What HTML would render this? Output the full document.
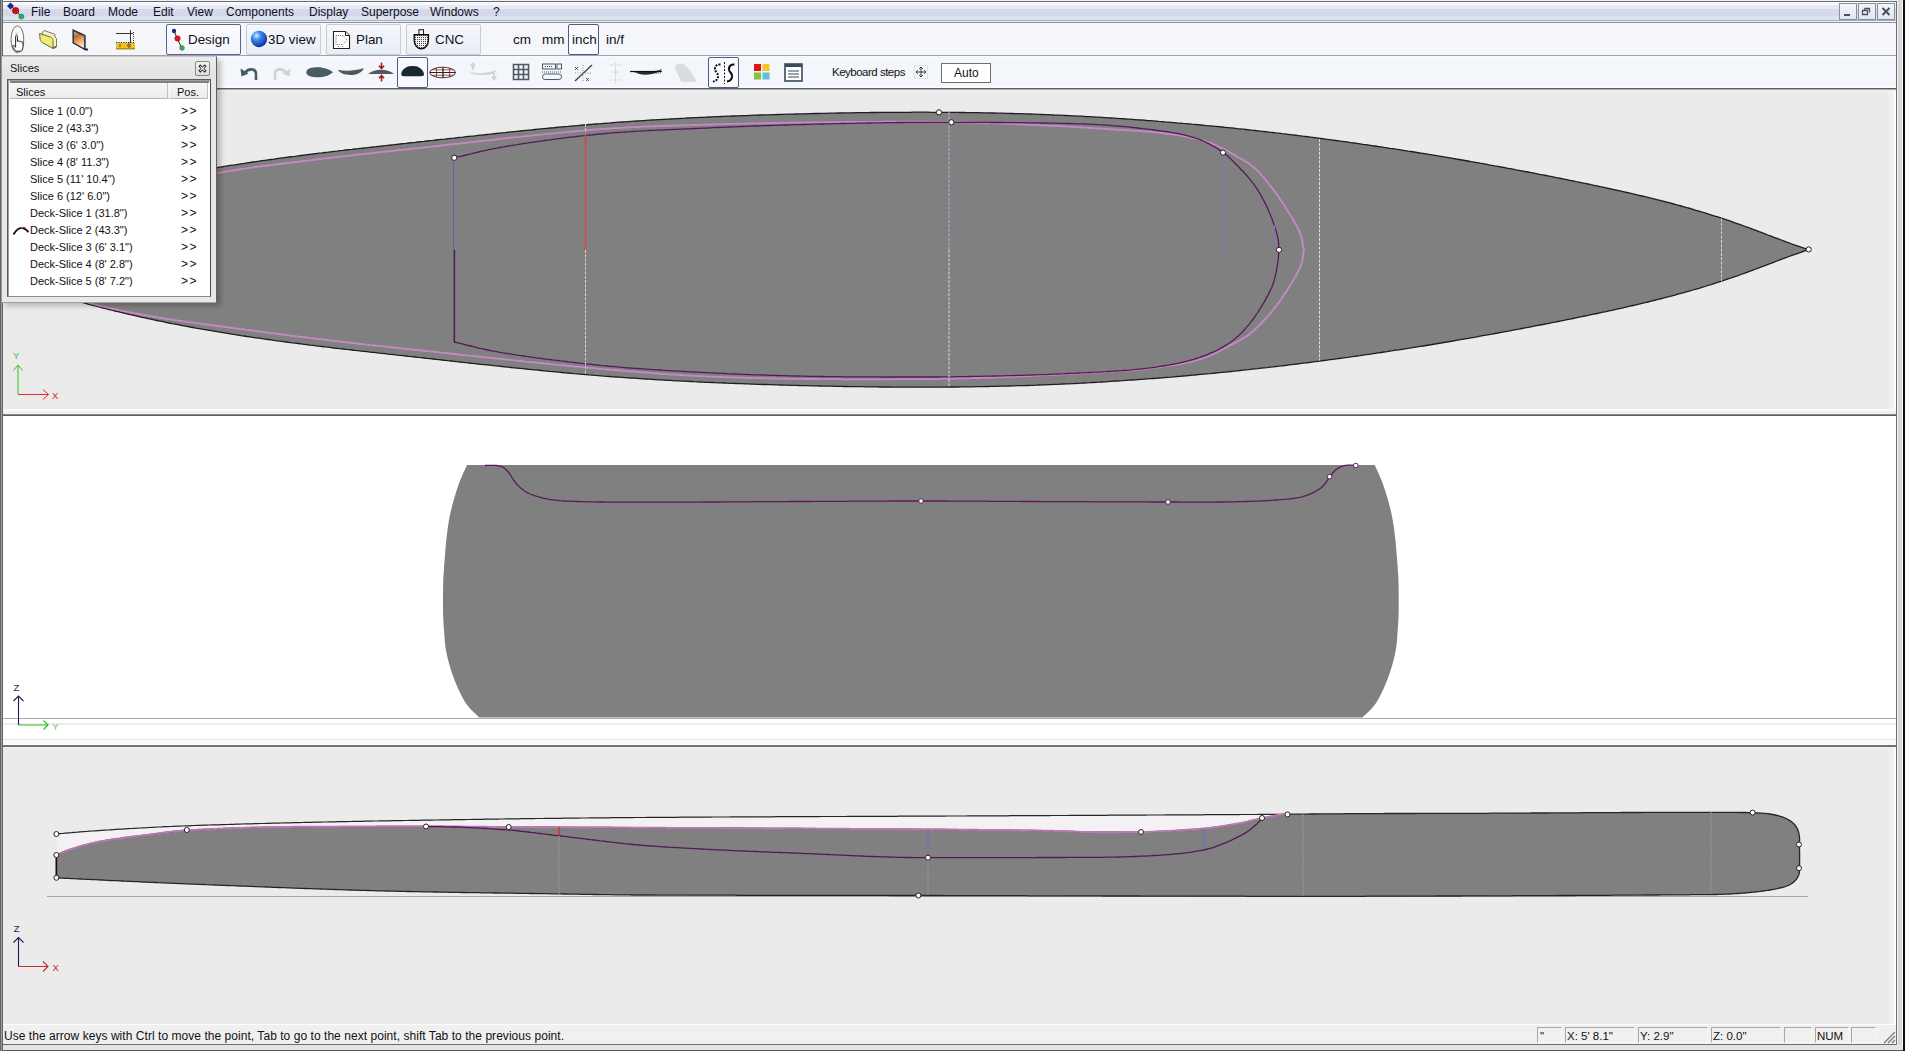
<!DOCTYPE html>
<html><head><meta charset="utf-8">
<style>
*{margin:0;padding:0;box-sizing:border-box}
html,body{width:1905px;height:1051px;overflow:hidden;background:#ebebeb;font-family:"Liberation Sans",sans-serif;color:#000}
.a{position:absolute}
.t{position:absolute;white-space:nowrap;line-height:1}
#menubar{left:2px;top:2px;width:1894px;height:18px;background:linear-gradient(#fdfdff 0px,#fdfdff 1px,#f6f7fd 1px,#f6f7fd 3px,#e9eaf8 3px,#e6e8f6 7px,#d5d9ec 7px,#d3d8eb 14px,#d9e3ef 14px,#dce5f0 18px)}
.mi{position:absolute;top:5px;font-size:12px;color:#101018}
#tb1{left:2px;top:23px;width:1894px;height:32px;background:#f4f6fa}
#tb2{left:2px;top:57px;width:1894px;height:30px;background:#f3f6fa}
.btn{position:absolute;top:24px;width:75px;height:31px;border:1px solid #c6ccd8;border-radius:2px;background:linear-gradient(#f4f7fc,#e9eef6)}
.btn.sel{border-color:#5a6290;background:linear-gradient(#fbfcff,#f2f5fb)}
.bt{position:absolute;top:8px;font-size:13.4px;color:#101020}
.unit{position:absolute;top:31.5px;font-size:13.5px;color:#101018}
.row{position:absolute;left:30px;font-size:11px;color:#101010}
.gg{position:absolute;left:181px;font-size:12px;letter-spacing:1.5px;color:#101010;margin-top:-1px}
.sb{position:absolute;top:1027px;height:16px;border:1px solid #a8a8a8;border-right-color:#f8f8f8;border-bottom-color:#f8f8f8}
.st{position:absolute;top:1030px;font-size:11.5px;color:#101010}
</style></head><body>
<!-- outer frame -->
<div class="a" style="left:0;top:0;width:1905px;height:1051px;background:#ebebeb"></div>
<div class="a" style="left:0;top:0;width:1903px;height:1px;background:#f2f2f2"></div>
<div class="a" style="left:0;top:1px;width:1897px;height:1px;background:#686e6e"></div>
<div class="a" style="left:1896px;top:1px;width:1px;height:1044px;background:#6e6e6e"></div>
<div class="a" style="left:1897px;top:0;width:6px;height:1051px;background:linear-gradient(90deg,#f0f0f0 0,#f0f0f0 1px,#d8d8d8 1px,#d8d8d8 5px,#fafafa 5px)"></div>
<div class="a" style="left:1903px;top:0;width:2px;height:1051px;background:#101012"></div>

<!-- menu bar -->
<div id="menubar" class="a"></div>
<div class="a" style="left:2px;top:20px;width:1894px;height:1px;background:#a9b0b8"></div>
<div class="a" style="left:2px;top:21px;width:1894px;height:1px;background:#eef0f5"></div>
<div class="a" style="left:2px;top:22px;width:1894px;height:1px;background:#8c9299"></div>
<svg class="a" style="left:6px;top:2px" width="22" height="20" viewBox="0 0 22 20">
 <line x1="4.5" y1="3.5" x2="15.5" y2="14.5" stroke="#333" stroke-width="1"/>
 <rect x="2" y="1.5" width="5" height="5" fill="#1c2c80" transform="rotate(45 4.5 4)"/>
 <circle cx="9.6" cy="8.6" r="3.2" fill="#d01010" stroke="#700" stroke-width="0.6"/>
 <circle cx="15.4" cy="14.6" r="2.5" fill="#30b040" stroke="#175" stroke-width="0.6"/>
</svg>
<span class="mi" style="left:31px">File</span>
<span class="mi" style="left:63px">Board</span>
<span class="mi" style="left:108px">Mode</span>
<span class="mi" style="left:153px">Edit</span>
<span class="mi" style="left:187px">View</span>
<span class="mi" style="left:226px">Components</span>
<span class="mi" style="left:309px">Display</span>
<span class="mi" style="left:361px">Superpose</span>
<span class="mi" style="left:430px">Windows</span>
<span class="mi" style="left:493px">?</span>
<!-- mdi buttons -->
<div class="a" style="left:1839px;top:3px;width:18px;height:17px;border:1px solid #8a8e98;background:linear-gradient(#f2f6fc,#dde6f2)"></div>
<div class="a" style="left:1858px;top:3px;width:18px;height:17px;border:1px solid #8a8e98;background:linear-gradient(#f2f6fc,#dde6f2)"></div>
<div class="a" style="left:1877px;top:3px;width:18px;height:17px;border:1px solid #8a8e98;background:linear-gradient(#f2f6fc,#dde6f2)"></div>
<div class="a" style="left:1844px;top:14px;width:6px;height:2px;background:#4a5058"></div>
<svg class="a" style="left:1858px;top:3px" width="18" height="17"><path d="M6.5 5.5h5v4M4.5 7.5h5v4h-5z M6.5 5.5v2" fill="none" stroke="#4a5058" stroke-width="1.3"/></svg>
<svg class="a" style="left:1877px;top:3px" width="18" height="17"><path d="M5.5 5l7 7M12.5 5l-7 7" stroke="#4a5058" stroke-width="2"/></svg>

<!-- toolbar 1 -->
<div id="tb1" class="a"></div>
<div class="a" style="left:2px;top:55px;width:1894px;height:1px;background:#a0a2a8"></div>
<div class="a" style="left:2px;top:56px;width:1894px;height:1px;background:#fafbfd"></div>
<!-- hand board icon -->
<svg class="a" style="left:10px;top:25px" width="16" height="29" viewBox="0 0 16 29">
 <path d="M7.4 1C11 1 13.7 7 13.7 14.5C13.7 22 11 27.6 7.4 27.6C3.8 27.6 1.1 22 1.1 14.5C1.1 7 3.8 1 7.4 1z" fill="#fcfcfc" stroke="#606060" stroke-width="0.9"/>
 <path d="M5.5 7.5l2.6 2.6M8.1 7.5l-2.6 2.6" stroke="#eaa0b8" stroke-width="0.9"/>
 <path d="M5.6 11.2c0-0.9 1.8-0.9 1.8 0v5.2c0.5-0.8 1.9-0.6 2 0.3c0.5-0.7 1.8-0.5 1.9 0.4c0.6-0.5 1.7-0.2 1.7 0.7v3.6c0 2-0.7 3.6-1.6 4.8h-5.6c-0.8-1-2.4-3-3.1-4.6c-0.4-0.9 0.6-1.7 1.3-1l1.6 1.6z" fill="#fff" stroke="#111" stroke-width="0.9"/>
</svg>
<!-- folder -->
<svg class="a" style="left:38px;top:29px" width="21" height="21" viewBox="0 0 21 21">
 <path d="M4 4l2-2.5l3 1l8 3v2.5l1.5 1.5v8l-2 2-11-6z" fill="#f8f4c8" stroke="#6a6a48" stroke-width="0.9"/>
 <path d="M1.5 4.5l11 3.5c1.5 0.5 2.5 2 2.5 3.5v8l-10-5.5c-1.5-0.8-2.5-2-2.8-3.5z" fill="#f0ec70" stroke="#6a6a48" stroke-width="1"/>
 <path d="M14.5 19l4-1.5" stroke="#6a6a50" stroke-width="1.4"/>
</svg>
<!-- save icon -->
<svg class="a" style="left:72px;top:29px" width="17" height="22" viewBox="0 0 17 22">
 <defs><linearGradient id="sg" x1="0" y1="0" x2="0.3" y2="1"><stop offset="0" stop-color="#b8d8f0"/><stop offset="0.35" stop-color="#c06828"/><stop offset="0.7" stop-color="#f0b070"/><stop offset="1" stop-color="#f8f0d0"/></linearGradient></defs>
 <path d="M1.2 1.2l11.5 5.3v13.8l-11.5-6.5z" fill="url(#sg)" stroke="#28323c" stroke-width="1.5"/>
 <path d="M12.7 6.5l1 0.4v13l-1-0.4z" fill="#506070"/>
 <path d="M12 20l4 0.8" stroke="#28323c" stroke-width="2"/>
</svg>
<!-- ruler -->
<svg class="a" style="left:114px;top:29px" width="22" height="22" viewBox="0 0 22 22">
 <path d="M2 4.5h17M16.5 1v13" stroke="#333" stroke-width="1"/>
 <path d="M19.5 3v10" stroke="#333" stroke-width="1" stroke-dasharray="1 1"/>
 <path d="M2 13.5h18" stroke="#222" stroke-width="1.2" stroke-dasharray="1.2 1.2"/>
 <rect x="2" y="14" width="19" height="6" fill="#f0c020"/>
 <rect x="2" y="19" width="19" height="1.5" fill="#b09020"/>
 <path d="M6 15v3M14 15h2v3h-2z" stroke="#333" stroke-width="0.8" fill="none"/>
</svg>
<!-- mode buttons -->
<div class="btn sel" style="left:166px"></div>
<div class="btn" style="left:246px"></div>
<div class="btn" style="left:326px"></div>
<div class="btn" style="left:406px"></div>
<svg class="a" style="left:171px;top:28px" width="16" height="24" viewBox="0 0 16 24">
 <line x1="3" y1="3" x2="11" y2="21" stroke="#222" stroke-width="1"/>
 <circle cx="3" cy="3" r="2.2" fill="#1c2c80"/>
 <circle cx="6.5" cy="10.5" r="3" fill="#d01818"/>
 <circle cx="11" cy="20" r="2.4" fill="#40b040" stroke="#175" stroke-width="0.5"/>
</svg>
<span class="bt" style="left:188px;top:32px">Design</span>
<svg class="a" style="left:250px;top:30px" width="18" height="18"><defs><radialGradient id="gb" cx="0.35" cy="0.3" r="0.75"><stop offset="0" stop-color="#d8ecff"/><stop offset="0.35" stop-color="#3a8af0"/><stop offset="1" stop-color="#0a2a9a"/></radialGradient></defs><circle cx="9" cy="9" r="8.2" fill="url(#gb)"/></svg>
<span class="bt" style="left:268px;top:32px">3D view</span>
<svg class="a" style="left:332px;top:30px" width="19" height="20" viewBox="0 0 19 20">
 <path d="M1.5 1.5h12l4 4v13h-16z" fill="#fff" stroke="#222" stroke-width="1.1"/>
 <path d="M13.5 1.5v4h4" fill="#e8e8e8" stroke="#222" stroke-width="1"/>
 <path d="M4 5.5h7l4 4.5l-4 4.5h-7M4 5.5v9" fill="none" stroke="#666" stroke-width="0.9" stroke-dasharray="1 1"/>
 <path d="M6 16.5h2M10 16.5h2" stroke="#555" stroke-width="0.9" stroke-dasharray="1 1"/>
</svg>
<span class="bt" style="left:356px;top:32px">Plan</span>
<svg class="a" style="left:413px;top:29px" width="17" height="21" viewBox="0 0 17 21">
 <defs><pattern id="dots" width="2" height="2" patternUnits="userSpaceOnUse"><rect width="2" height="2" fill="#f4f4f4"/><rect width="1" height="1" fill="#444"/></pattern></defs>
 <rect x="6" y="0.7" width="4.5" height="5" fill="#fff" stroke="#222" stroke-width="1.1"/>
 <path d="M1.2 5.7h14.2v5.5c0 4.6-3.1 8.6-7.1 8.6s-7.1-4-7.1-8.6z" fill="url(#dots)" stroke="#111" stroke-width="1.4"/>
</svg>
<span class="bt" style="left:435px;top:32px">CNC</span>
<!-- units -->
<span class="unit" style="left:513px">cm</span>
<span class="unit" style="left:542px">mm</span>
<div class="a" style="left:568px;top:24px;width:31px;height:31px;border:1px solid #525a8c;border-radius:2px;background:#f8fafe"></div>
<span class="unit" style="left:572px">inch</span>
<span class="unit" style="left:606px">in/f</span>

<!-- toolbar 2 -->
<div id="tb2" class="a"></div>
<div class="a" style="left:2px;top:87px;width:1894px;height:1px;background:#fafcfd"></div>
<div class="a" style="left:2px;top:88px;width:1894px;height:1px;background:#5c5e62"></div>
<div class="a" style="left:2px;top:89px;width:1894px;height:1px;background:#a8a8aa"></div>
<div class="a" style="left:2px;top:90px;width:1894px;height:1px;background:#f2f2f2"></div>
<!-- undo/redo -->
<svg class="a" style="left:239px;top:64px" width="22" height="18" viewBox="0 0 22 18">
 <path d="M6 9c3-5 11-5 11 1v6" fill="none" stroke="#4a5a62" stroke-width="2.6"/>
 <path d="M1.5 4.5l1 8l7-3z" fill="#4a5a62"/>
</svg>
<svg class="a" style="left:270px;top:64px" width="22" height="18" viewBox="0 0 22 18">
 <path d="M16 9c-3-5-11-5-11 1v6" fill="none" stroke="#d0d2d4" stroke-width="2.6"/>
 <path d="M20.5 4.5l-1 8l-7-3z" fill="#d0d2d4"/>
</svg>
<svg class="a" style="left:305px;top:66px" width="30" height="13"><path d="M1.3 6.3C1.3 2.3 7 1.2 12.5 1.2C19.5 1.2 24.5 3.5 28 6.3C24.5 9.3 19.5 11.3 12.5 11.3C7 11.3 1.3 10.3 1.3 6.3z" fill="#4a5c60"/></svg>
<svg class="a" style="left:337px;top:66px" width="28" height="10"><path d="M0.8 3.8C8 5.2 18 5 26.8 2.2C25.5 6 20.5 9 13.5 9C7 9 3 7 0.8 3.8z" fill="#4a5c60"/></svg>
<svg class="a" style="left:367px;top:60px" width="28" height="24" viewBox="0 0 28 24">
 <path d="M1 14C5 10.8 9 9.8 14 9.8C19 9.8 23 10.8 27 14z" fill="#4a5c60"/>
 <path d="M14.5 2.5v5.5M12 5.8l2.5 2.8l2.5-2.8M14.5 21.5v-5.5M12 18.2l2.5-2.8l2.5 2.8" stroke="#a81c24" stroke-width="1.6" fill="none"/>
</svg>
<div class="a" style="left:397px;top:57px;width:31px;height:31px;border:1px solid #525a8c;border-radius:2px;background:#f8fafe"></div>
<svg class="a" style="left:400px;top:65px" width="26" height="12"><path d="M1.2 9.2C1.2 6 5 2.5 8 1.5C10 0.8 15 0.8 17 1.5C20 2.5 24 6 24 9.2C24 10.5 23 11.2 21 11.2H4C2.2 11.2 1.2 10.5 1.2 9.2z" fill="#1a2a30"/></svg>
<svg class="a" style="left:429px;top:66px" width="28" height="13" viewBox="0 0 28 13">
 <defs><clipPath id="gc"><ellipse cx="13.6" cy="6.5" rx="12.8" ry="5.3"/></clipPath></defs>
 <ellipse cx="13.6" cy="6.5" rx="12.8" ry="5.3" fill="#fff"/>
 <g clip-path="url(#gc)"><path d="M0 3.8h28M0 6.5h28M0 9.2h28M7.5 0v13M14 0v13M20.5 0v13" stroke="#7a2a2a" stroke-width="0.8"/>
 <path d="M0 6.5h28M14 0v13" stroke="#2a1a1a" stroke-width="0.9"/></g>
 <ellipse cx="13.6" cy="6.5" rx="12.8" ry="5.3" fill="none" stroke="#3a2424" stroke-width="0.9"/>
</svg>
<svg class="a" style="left:467px;top:61px" width="32" height="20" viewBox="0 0 32 20">
 <path d="M2 10c5 3 18 3 27 -1c0 3-5 5-13 5s-11-1-14-4z" fill="#d0d2d4"/>
 <path d="M6 3v6M3.8 5.5l2.2-3l2.2 3M27 12v6M24.8 15.5l2.2 3l2.2-3" stroke="#d0d2d4" stroke-width="1.8" fill="none"/>
</svg>
<!-- grid -->
<svg class="a" style="left:512px;top:63px" width="18" height="18"><path d="M1.5 1.5h15v15h-15z M6.5 1.5v15M11.5 1.5v15M1.5 6.5h15M1.5 11.5h15" fill="none" stroke="#4a5a60" stroke-width="1.6"/></svg>
<svg class="a" style="left:541px;top:63px" width="22" height="19" viewBox="0 0 22 19">
 <rect x="1.5" y="1" width="13" height="5" fill="none" stroke="#4a5a60" stroke-width="1"/>
 <rect x="16" y="1" width="4.5" height="5" fill="none" stroke="#4a5a60" stroke-width="1"/>
 <path d="M4 3.5h8" stroke="#4a5a60" stroke-dasharray="1 1"/>
 <path d="M1 9h20" stroke="#4a5a60" stroke-dasharray="1 1"/>
 <rect x="1.5" y="11" width="19" height="5.5" rx="2.7" fill="none" stroke="#4a5a60" stroke-width="1"/>
</svg>
<svg class="a" style="left:573px;top:63px" width="21" height="20" viewBox="0 0 21 20">
 <path d="M2 18l17-16" stroke="#3a4a50" stroke-width="1.4"/>
 <path d="M10 2v16M2 10h17" stroke="#777" stroke-width="0.8" stroke-dasharray="1 1.5"/>
 <path d="M2 4l3 3M5 4l-3 3M13 15l3 3M16 15l-3 3" stroke="#333" stroke-width="0.8"/>
</svg>
<svg class="a" style="left:606px;top:61px" width="19" height="24"><path d="M9.5 1v22M3 4h13M3 19h13M6 11h7" stroke="#dcdcdc" stroke-width="1"/><circle cx="9.5" cy="11.5" r="1.5" fill="#dcdcdc"/></svg>
<svg class="a" style="left:629px;top:66px" width="34" height="11" viewBox="0 0 34 11">
 <path d="M1 5h24c3 0 5-1 8-2c-2 3-5 4-10 5c-5 1-12 1-15-1z" fill="#2a2a2a"/>
 <path d="M1 5.5h32" stroke="#111" stroke-width="1.2"/>
 <path d="M27 7h6" stroke="#555" stroke-dasharray="1 1"/>
</svg>
<svg class="a" style="left:672px;top:62px" width="26" height="22" viewBox="0 0 26 22">
 <path d="M3 5c0-3 4-4 8-3c5 2 9 10 13 16v2h-15c-1-5-6-11-6-15z" fill="#dadcdd"/>
</svg>
<div class="a" style="left:708px;top:57px;width:31px;height:31px;border:1px solid #525a8c;border-radius:2px;background:#f8fafe"></div>
<svg class="a" style="left:710px;top:61px" width="27" height="24" viewBox="0 0 27 24">
 <path d="M10.5 3.5C5 3 3.5 8 6.5 11.5C9.5 15 8 20 3 20.5" fill="none" stroke="#111" stroke-width="2" stroke-dasharray="2 1.2"/>
 <path d="M14.5 1v22" stroke="#111" stroke-width="1" stroke-dasharray="2 1.5"/>
 <path d="M24.5 3.5C19 3 17.5 8 20.5 11.5C23.5 15 22 20 17 20.5" fill="none" stroke="#111" stroke-width="2"/>
</svg>
<svg class="a" style="left:753px;top:63px" width="18" height="18">
 <rect x="1" y="1" width="7" height="7" fill="#e01418"/><rect x="9.5" y="1" width="7" height="7" fill="#f8c428"/>
 <rect x="1" y="9.5" width="7" height="7" fill="#88c040"/><rect x="9.5" y="9.5" width="7" height="7" fill="#60c0d8"/>
</svg>
<svg class="a" style="left:784px;top:63px" width="19" height="19" viewBox="0 0 19 19">
 <rect x="1" y="1" width="17" height="17" fill="#fff" stroke="#3a4a58" stroke-width="1.6"/>
 <rect x="1" y="1" width="17" height="3" fill="#3a4a58"/>
 <path d="M4 8h11M4 11h11M4 14h11" stroke="#3a4a58" stroke-width="1.2"/>
</svg>
<span class="t" style="left:832px;top:67px;font-size:11.5px;color:#111;letter-spacing:-0.5px">Keyboard steps</span>
<svg class="a" style="left:914px;top:65px" width="14" height="14" viewBox="0 0 14 14">
 <rect x="0.5" y="0.5" width="13" height="13" fill="none" stroke="#bbb" stroke-width="0.6" stroke-dasharray="1 1"/><path d="M7 2v10M2 7h10M5.2 3.8L7 2l1.8 1.8M5.2 10.2L7 12l1.8-1.8M3.8 5.2L2 7l1.8 1.8M10.2 5.2L12 7l-1.8 1.8" fill="none" stroke="#3a3a3a" stroke-width="1"/>
</svg>
<div class="a" style="left:941px;top:63px;width:50px;height:20px;border:1px solid #6e6e6e;background:#fff"></div>
<span class="t" style="left:954px;top:67px;font-size:12px;color:#111">Auto</span>

<!-- ===== PANEL 1: top view ===== -->
<div class="a" style="left:2px;top:91px;width:1894px;height:318px;background:#ebebeb"></div>
<div class="a" style="left:2px;top:409px;width:1894px;height:5px;background:linear-gradient(#fafafa 0,#fafafa 2px,#f0f0f0 2px)"></div>
<div class="a" style="left:2px;top:414px;width:1894px;height:1px;background:#8a8a8a"></div>
<div class="a" style="left:2px;top:415px;width:1894px;height:1px;background:#5e5e5e"></div>
<svg class="a" style="left:0;top:0" width="1905" height="420">
 <polygon points="40,209.7 43,208.7 46,207.8 49,206.8 52,205.9 55,205 58,204 61,203.1 64,202.2 67,201.3 70,200.5 73,199.6 76,198.7 79,197.9 82,197.1 85,196.2 88,195.4 91,194.6 94,193.8 97,193 100,192.2 103,191.4 106,190.7 109,189.9 112,189.2 115,188.4 118,187.7 121,187 124,186.3 127,185.5 130,184.8 133,184.2 136,183.5 139,182.8 142,182.1 145,181.5 148,180.8 151,180.2 154,179.5 157,178.9 160,178.3 163,177.7 166,177 169,176.4 172,175.8 175,175.3 178,174.7 181,174.1 184,173.5 187,173 190,172.4 193,171.9 196,171.3 199,170.8 202,170.2 205,169.7 208,169.2 211,168.7 214,168.2 217,167.7 220,167.2 223,166.7 226,166.2 229,165.7 232,165.2 235,164.8 238,164.3 241,163.8 244,163.4 247,162.9 250,162.5 253,162 256,161.6 259,161.2 262,160.7 265,160.3 268,159.9 271,159.5 274,159.1 277,158.6 280,158.2 283,157.8 286,157.4 289,157 292,156.6 295,156.3 298,155.9 301,155.5 304,155.1 307,154.7 310,154.3 313,154 316,153.6 319,153.2 322,152.9 325,152.5 328,152.2 331,151.8 334,151.4 337,151.1 340,150.7 343,150.4 346,150 349,149.7 352,149.4 355,149 358,148.7 361,148.3 364,148 367,147.7 370,147.3 373,147 376,146.7 379,146.3 382,146 385,145.7 388,145.3 391,145 394,144.7 397,144.3 400,144 403,143.7 406,143.4 409,143 412,142.7 415,142.4 418,142 421,141.7 424,141.4 427,141 430,140.7 433,140.4 436,140 439,139.7 442,139.4 445,139.1 448,138.7 451,138.4 454,138.1 457,137.7 460,137.4 463,137.1 466,136.7 469,136.4 472,136.1 475,135.8 478,135.4 481,135.1 484,134.8 487,134.5 490,134.2 493,133.8 496,133.5 499,133.2 502,132.9 505,132.6 508,132.2 511,131.9 514,131.6 517,131.3 520,131 523,130.7 526,130.4 529,130.1 532,129.8 535,129.5 538,129.2 541,128.9 544,128.6 547,128.3 550,128 553,127.8 556,127.5 559,127.2 562,126.9 565,126.6 568,126.4 571,126.1 574,125.8 577,125.6 580,125.3 583,125 586,124.8 589,124.5 592,124.3 595,124 598,123.8 601,123.6 604,123.3 607,123.1 610,122.9 613,122.6 616,122.4 619,122.2 622,122 625,121.8 628,121.6 631,121.4 634,121.2 637,121 640,120.8 643,120.6 646,120.4 649,120.2 652,120 655,119.8 658,119.6 661,119.5 664,119.3 667,119.1 670,119 673,118.8 676,118.6 679,118.5 682,118.3 685,118.2 688,118 691,117.9 694,117.7 697,117.6 700,117.4 703,117.3 706,117.1 709,117 712,116.9 715,116.7 718,116.6 721,116.5 724,116.4 727,116.2 730,116.1 733,116 736,115.9 739,115.8 742,115.7 745,115.6 748,115.5 751,115.3 754,115.2 757,115.1 760,115 763,114.9 766,114.9 769,114.8 772,114.7 775,114.6 778,114.5 781,114.4 784,114.3 787,114.2 790,114.1 793,114.1 796,114 799,113.9 802,113.8 805,113.8 808,113.7 811,113.6 814,113.5 817,113.5 820,113.4 823,113.3 826,113.3 829,113.2 832,113.2 835,113.1 838,113 841,113 844,112.9 847,112.9 850,112.8 853,112.8 856,112.7 859,112.7 862,112.7 865,112.6 868,112.6 871,112.5 874,112.5 877,112.5 880,112.4 883,112.4 886,112.4 889,112.4 892,112.3 895,112.3 898,112.3 901,112.3 904,112.3 907,112.3 910,112.3 913,112.2 916,112.2 919,112.2 922,112.2 925,112.2 928,112.2 931,112.3 934,112.3 937,112.3 940,112.3 943,112.3 946,112.3 949,112.4 952,112.4 955,112.4 958,112.4 961,112.5 964,112.5 967,112.6 970,112.6 973,112.6 976,112.7 979,112.7 982,112.8 985,112.8 988,112.9 991,113 994,113 997,113.1 1000,113.2 1003,113.2 1006,113.3 1009,113.4 1012,113.5 1015,113.6 1018,113.7 1021,113.7 1024,113.8 1027,113.9 1030,114 1033,114.1 1036,114.2 1039,114.4 1042,114.5 1045,114.6 1048,114.7 1051,114.8 1054,115 1057,115.1 1060,115.2 1063,115.4 1066,115.5 1069,115.6 1072,115.8 1075,115.9 1078,116.1 1081,116.2 1084,116.4 1087,116.6 1090,116.7 1093,116.9 1096,117.1 1099,117.2 1102,117.4 1105,117.6 1108,117.8 1111,118 1114,118.2 1117,118.4 1120,118.6 1123,118.7 1126,119 1129,119.2 1132,119.4 1135,119.6 1138,119.8 1141,120 1144,120.2 1147,120.5 1150,120.7 1153,120.9 1156,121.1 1159,121.4 1162,121.6 1165,121.9 1168,122.1 1171,122.3 1174,122.6 1177,122.9 1180,123.1 1183,123.4 1186,123.6 1189,123.9 1192,124.2 1195,124.4 1198,124.7 1201,125 1204,125.3 1207,125.6 1210,125.8 1213,126.1 1216,126.4 1219,126.7 1222,127 1225,127.3 1228,127.6 1231,127.9 1234,128.2 1237,128.6 1240,128.9 1243,129.2 1246,129.5 1249,129.8 1252,130.2 1255,130.5 1258,130.8 1261,131.2 1264,131.5 1267,131.8 1270,132.2 1273,132.5 1276,132.9 1279,133.2 1282,133.6 1285,133.9 1288,134.3 1291,134.7 1294,135 1297,135.4 1300,135.8 1303,136.2 1306,136.5 1309,136.9 1312,137.3 1315,137.7 1318,138.1 1321,138.5 1324,138.9 1327,139.3 1330,139.7 1333,140.1 1336,140.5 1339,140.9 1342,141.3 1345,141.7 1348,142.1 1351,142.6 1354,143 1357,143.4 1360,143.8 1363,144.3 1366,144.7 1369,145.1 1372,145.6 1375,146 1378,146.5 1381,146.9 1384,147.4 1387,147.8 1390,148.3 1393,148.7 1396,149.2 1399,149.6 1402,150.1 1405,150.6 1408,151.1 1411,151.5 1414,152 1417,152.5 1420,153 1423,153.4 1426,153.9 1429,154.4 1432,154.9 1435,155.4 1438,155.9 1441,156.4 1444,156.9 1447,157.4 1450,157.9 1453,158.4 1456,159 1459,159.5 1462,160 1465,160.5 1468,161 1471,161.6 1474,162.1 1477,162.6 1480,163.2 1483,163.7 1486,164.2 1489,164.8 1492,165.3 1495,165.9 1498,166.4 1501,167 1504,167.5 1507,168.1 1510,168.6 1513,169.2 1516,169.8 1519,170.3 1522,170.9 1525,171.5 1528,172 1531,172.6 1534,173.2 1537,173.8 1540,174.4 1543,174.9 1546,175.5 1549,176.1 1552,176.7 1555,177.3 1558,177.9 1561,178.5 1564,179.1 1567,179.7 1570,180.3 1573,180.9 1576,181.6 1579,182.2 1582,182.8 1585,183.4 1588,184 1591,184.7 1594,185.3 1597,185.9 1600,186.6 1603,187.2 1606,187.8 1609,188.5 1612,189.1 1615,189.8 1618,190.5 1621,191.1 1624,191.8 1627,192.5 1630,193.2 1633,193.9 1636,194.6 1639,195.3 1642,196 1645,196.7 1648,197.4 1651,198.2 1654,198.9 1657,199.7 1660,200.4 1663,201.2 1666,202 1669,202.7 1672,203.5 1675,204.3 1678,205.2 1681,206 1684,206.8 1687,207.7 1690,208.5 1693,209.4 1696,210.3 1699,211.1 1702,212 1705,212.9 1708,213.9 1711,214.8 1714,215.8 1717,216.7 1720,217.7 1723,218.7 1726,219.7 1729,220.7 1732,221.7 1735,222.8 1738,223.8 1741,224.9 1744,226 1747,227.1 1750,228.2 1753,229.3 1756,230.4 1759,231.6 1762,232.7 1765,233.8 1768,235 1771,236.1 1774,237.3 1777,238.4 1780,239.5 1783,240.7 1786,241.8 1789,242.9 1792,244 1795,245.1 1798,246.1 1801,247.1 1804,248.2 1807,249.2 1808.7,249.7 1808.7,249.7 1807,250.2 1804,251.2 1801,252.3 1798,253.3 1795,254.3 1792,255.4 1789,256.5 1786,257.6 1783,258.7 1780,259.9 1777,261 1774,262.1 1771,263.3 1768,264.4 1765,265.6 1762,266.7 1759,267.8 1756,269 1753,270.1 1750,271.2 1747,272.3 1744,273.4 1741,274.5 1738,275.6 1735,276.6 1732,277.7 1729,278.7 1726,279.7 1723,280.7 1720,281.7 1717,282.7 1714,283.6 1711,284.6 1708,285.5 1705,286.5 1702,287.4 1699,288.3 1696,289.1 1693,290 1690,290.9 1687,291.7 1684,292.6 1681,293.4 1678,294.2 1675,295.1 1672,295.9 1669,296.7 1666,297.4 1663,298.2 1660,299 1657,299.7 1654,300.5 1651,301.2 1648,302 1645,302.7 1642,303.4 1639,304.1 1636,304.8 1633,305.5 1630,306.2 1627,306.9 1624,307.6 1621,308.3 1618,308.9 1615,309.6 1612,310.3 1609,310.9 1606,311.6 1603,312.2 1600,312.8 1597,313.5 1594,314.1 1591,314.7 1588,315.4 1585,316 1582,316.6 1579,317.2 1576,317.8 1573,318.5 1570,319.1 1567,319.7 1564,320.3 1561,320.9 1558,321.5 1555,322.1 1552,322.7 1549,323.3 1546,323.9 1543,324.5 1540,325 1537,325.6 1534,326.2 1531,326.8 1528,327.4 1525,327.9 1522,328.5 1519,329.1 1516,329.6 1513,330.2 1510,330.8 1507,331.3 1504,331.9 1501,332.4 1498,333 1495,333.5 1492,334.1 1489,334.6 1486,335.2 1483,335.7 1480,336.2 1477,336.8 1474,337.3 1471,337.8 1468,338.4 1465,338.9 1462,339.4 1459,339.9 1456,340.4 1453,341 1450,341.5 1447,342 1444,342.5 1441,343 1438,343.5 1435,344 1432,344.5 1429,345 1426,345.5 1423,346 1420,346.4 1417,346.9 1414,347.4 1411,347.9 1408,348.3 1405,348.8 1402,349.3 1399,349.8 1396,350.2 1393,350.7 1390,351.1 1387,351.6 1384,352 1381,352.5 1378,352.9 1375,353.4 1372,353.8 1369,354.3 1366,354.7 1363,355.1 1360,355.6 1357,356 1354,356.4 1351,356.8 1348,357.3 1345,357.7 1342,358.1 1339,358.5 1336,358.9 1333,359.3 1330,359.7 1327,360.1 1324,360.5 1321,360.9 1318,361.3 1315,361.7 1312,362.1 1309,362.5 1306,362.9 1303,363.2 1300,363.6 1297,364 1294,364.4 1291,364.7 1288,365.1 1285,365.5 1282,365.8 1279,366.2 1276,366.5 1273,366.9 1270,367.2 1267,367.6 1264,367.9 1261,368.2 1258,368.6 1255,368.9 1252,369.2 1249,369.6 1246,369.9 1243,370.2 1240,370.5 1237,370.8 1234,371.2 1231,371.5 1228,371.8 1225,372.1 1222,372.4 1219,372.7 1216,373 1213,373.3 1210,373.6 1207,373.8 1204,374.1 1201,374.4 1198,374.7 1195,375 1192,375.2 1189,375.5 1186,375.8 1183,376 1180,376.3 1177,376.5 1174,376.8 1171,377.1 1168,377.3 1165,377.5 1162,377.8 1159,378 1156,378.3 1153,378.5 1150,378.7 1147,378.9 1144,379.2 1141,379.4 1138,379.6 1135,379.8 1132,380 1129,380.2 1126,380.4 1123,380.7 1120,380.8 1117,381 1114,381.2 1111,381.4 1108,381.6 1105,381.8 1102,382 1099,382.2 1096,382.3 1093,382.5 1090,382.7 1087,382.8 1084,383 1081,383.2 1078,383.3 1075,383.5 1072,383.6 1069,383.8 1066,383.9 1063,384 1060,384.2 1057,384.3 1054,384.4 1051,384.6 1048,384.7 1045,384.8 1042,384.9 1039,385 1036,385.2 1033,385.3 1030,385.4 1027,385.5 1024,385.6 1021,385.7 1018,385.7 1015,385.8 1012,385.9 1009,386 1006,386.1 1003,386.2 1000,386.2 997,386.3 994,386.4 991,386.4 988,386.5 985,386.6 982,386.6 979,386.7 976,386.7 973,386.8 970,386.8 967,386.8 964,386.9 961,386.9 958,387 955,387 952,387 949,387 946,387.1 943,387.1 940,387.1 937,387.1 934,387.1 931,387.1 928,387.2 925,387.2 922,387.2 919,387.2 916,387.2 913,387.2 910,387.1 907,387.1 904,387.1 901,387.1 898,387.1 895,387.1 892,387.1 889,387 886,387 883,387 880,387 877,386.9 874,386.9 871,386.9 868,386.8 865,386.8 862,386.7 859,386.7 856,386.7 853,386.6 850,386.6 847,386.5 844,386.5 841,386.4 838,386.4 835,386.3 832,386.2 829,386.2 826,386.1 823,386.1 820,386 817,385.9 814,385.9 811,385.8 808,385.7 805,385.6 802,385.6 799,385.5 796,385.4 793,385.3 790,385.3 787,385.2 784,385.1 781,385 778,384.9 775,384.8 772,384.7 769,384.6 766,384.5 763,384.5 760,384.4 757,384.3 754,384.2 751,384.1 748,383.9 745,383.8 742,383.7 739,383.6 736,383.5 733,383.4 730,383.3 727,383.2 724,383 721,382.9 718,382.8 715,382.7 712,382.5 709,382.4 706,382.3 703,382.1 700,382 697,381.8 694,381.7 691,381.5 688,381.4 685,381.2 682,381.1 679,380.9 676,380.8 673,380.6 670,380.4 667,380.3 664,380.1 661,379.9 658,379.8 655,379.6 652,379.4 649,379.2 646,379 643,378.8 640,378.6 637,378.4 634,378.2 631,378 628,377.8 625,377.6 622,377.4 619,377.2 616,377 613,376.8 610,376.5 607,376.3 604,376.1 601,375.8 598,375.6 595,375.4 592,375.1 589,374.9 586,374.6 583,374.4 580,374.1 577,373.8 574,373.6 571,373.3 568,373 565,372.8 562,372.5 559,372.2 556,371.9 553,371.6 550,371.4 547,371.1 544,370.8 541,370.5 538,370.2 535,369.9 532,369.6 529,369.3 526,369 523,368.7 520,368.4 517,368.1 514,367.8 511,367.5 508,367.2 505,366.8 502,366.5 499,366.2 496,365.9 493,365.6 490,365.2 487,364.9 484,364.6 481,364.3 478,364 475,363.6 472,363.3 469,363 466,362.7 463,362.3 460,362 457,361.7 454,361.3 451,361 448,360.7 445,360.3 442,360 439,359.7 436,359.4 433,359 430,358.7 427,358.4 424,358 421,357.7 418,357.4 415,357 412,356.7 409,356.4 406,356 403,355.7 400,355.4 397,355.1 394,354.7 391,354.4 388,354.1 385,353.7 382,353.4 379,353.1 376,352.7 373,352.4 370,352.1 367,351.7 364,351.4 361,351.1 358,350.7 355,350.4 352,350 349,349.7 346,349.4 343,349 340,348.7 337,348.3 334,348 331,347.6 328,347.2 325,346.9 322,346.5 319,346.2 316,345.8 313,345.4 310,345.1 307,344.7 304,344.3 301,343.9 298,343.5 295,343.1 292,342.8 289,342.4 286,342 283,341.6 280,341.2 277,340.8 274,340.3 271,339.9 268,339.5 265,339.1 262,338.7 259,338.2 256,337.8 253,337.4 250,336.9 247,336.5 244,336 241,335.6 238,335.1 235,334.6 232,334.2 229,333.7 226,333.2 223,332.7 220,332.2 217,331.7 214,331.2 211,330.7 208,330.2 205,329.7 202,329.2 199,328.6 196,328.1 193,327.5 190,327 187,326.4 184,325.9 181,325.3 178,324.7 175,324.1 172,323.6 169,323 166,322.4 163,321.7 160,321.1 157,320.5 154,319.9 151,319.2 148,318.6 145,317.9 142,317.3 139,316.6 136,315.9 133,315.2 130,314.6 127,313.9 124,313.1 121,312.4 118,311.7 115,311 112,310.2 109,309.5 106,308.7 103,308 100,307.2 97,306.4 94,305.6 91,304.8 88,304 85,303.2 82,302.3 79,301.5 76,300.7 73,299.8 70,298.9 67,298.1 64,297.2 61,296.3 58,295.4 55,294.4 52,293.5 49,292.6 46,291.6 43,290.7 40,289.7" fill="#808080" stroke="#241a24" stroke-width="1.3"/>
 <polyline points="40,213 42.5,212.4 44.9,211.9 47.4,211.3 49.9,210.7 52.4,210.2 55,209.6 57.5,209 60,208.4 62.6,207.8 65.1,207.2 67.7,206.7 70.3,206.1 72.8,205.5 75.4,204.9 78,204.2 80.6,203.6 83.2,203 85.8,202.4 88.4,201.8 91,201.2 93.6,200.6 96.2,200 98.8,199.4 101.4,198.7 104,198.1 106.6,197.5 109.2,196.9 111.9,196.3 114.5,195.7 117.1,195.1 119.7,194.4 122.3,193.8 124.8,193.2 127.4,192.6 130,192 132.6,191.4 135.2,190.8 137.7,190.2 140.3,189.6 142.8,189 145.4,188.5 147.9,187.9 150.4,187.3 152.9,186.7 155.4,186.2 157.9,185.6 160.4,185 162.8,184.5 165.3,183.9 167.7,183.4 170.2,182.8 172.6,182.3 175,181.8 177.3,181.3 179.7,180.7 182.1,180.2 184.4,179.7 186.7,179.2 189,178.8 191.3,178.3 193.5,177.8 195.8,177.3 198,176.9 200.2,176.4 202.4,176 204.5,175.6 206.7,175.2 208.8,174.7 210.9,174.3 212.9,174 215,173.6 217,173.2 219.9,172.7 222.8,172.2 225.6,171.7 228.4,171.2 231.1,170.7 233.7,170.3 236.3,169.9 238.9,169.5 241.4,169.1 243.9,168.7 246.4,168.4 248.8,168 251.2,167.7 253.6,167.3 255.9,167 258.3,166.7 260.6,166.4 263,166.1 265.3,165.8 267.7,165.5 270,165.2 272.4,164.9 274.7,164.6 277.1,164.3 279.5,164 282,163.7 284.4,163.4 286.9,163.1 289.4,162.8 292,162.5 294.6,162.2 297.3,161.8 300,161.5 302.3,161.2 304.6,160.9 306.9,160.6 309.2,160.3 311.5,160.1 313.9,159.8 316.2,159.5 318.6,159.2 320.9,158.9 323.3,158.6 325.6,158.4 328,158.1 330.4,157.8 332.8,157.5 335.2,157.2 337.6,157 340.1,156.7 342.5,156.4 345,156.1 347.4,155.8 349.9,155.6 352.4,155.3 354.9,155 357.3,154.7 359.9,154.4 362.4,154.2 364.9,153.9 367.4,153.6 370,153.3 372.6,153 375.1,152.8 377.7,152.5 380.3,152.2 382.9,151.9 385.6,151.6 388.2,151.3 390.8,151 393.5,150.8 396.2,150.5 398.9,150.2 401.5,149.9 404.3,149.6 407,149.3 409.7,149 412.5,148.7 415.2,148.4 418,148.1 420.2,147.9 422.5,147.6 424.8,147.4 427.1,147.1 429.4,146.8 431.8,146.6 434.1,146.3 436.5,146.1 438.9,145.8 441.4,145.5 443.8,145.2 446.3,145 448.7,144.7 451.2,144.4 453.7,144.1 456.3,143.8 458.8,143.6 461.4,143.3 463.9,143 466.5,142.7 469.1,142.4 471.7,142.1 474.3,141.8 476.9,141.5 479.5,141.2 482.1,140.9 484.7,140.7 487.4,140.4 490,140.1 492.7,139.8 495.3,139.5 498,139.2 500.6,138.9 503.3,138.6 505.9,138.3 508.6,138 511.2,137.7 513.9,137.4 516.5,137.2 519.2,136.9 521.8,136.6 524.5,136.3 527.1,136 529.7,135.8 532.3,135.5 534.9,135.2 537.5,134.9 540.1,134.7 542.7,134.4 545.3,134.1 547.9,133.9 550.4,133.6 552.9,133.4 555.5,133.1 558,132.9 560.5,132.6 563,132.4 565.4,132.2 567.9,131.9 570.3,131.7 572.7,131.5 575.1,131.3 577.5,131 579.8,130.8 582.2,130.6 584.5,130.4 586.8,130.2 589,130.1 591.3,129.9 593.5,129.7 595.7,129.5 597.9,129.4 600,129.2 602.8,129 605.7,128.8 608.4,128.6 611.2,128.4 613.9,128.2 616.6,128.1 619.3,127.9 621.9,127.8 624.5,127.6 627.1,127.5 629.6,127.3 632.2,127.2 634.7,127.1 637.2,127 639.7,126.9 642.1,126.7 644.6,126.6 647,126.5 649.4,126.4 651.8,126.4 654.2,126.3 656.6,126.2 659,126.1 661.4,126 663.8,125.9 666.2,125.9 668.5,125.8 670.9,125.7 673.3,125.6 675.7,125.6 678.1,125.5 680.5,125.4 682.9,125.3 685.3,125.3 687.7,125.2 690.1,125.1 692.6,125 695,125 697.5,124.9 700,124.8 702.5,124.7 705,124.6 707.4,124.6 709.9,124.5 712.4,124.4 714.8,124.3 717.2,124.3 719.7,124.2 722.1,124.1 724.5,124.1 726.9,124 729.4,123.9 731.8,123.9 734.2,123.8 736.6,123.7 739,123.7 741.4,123.6 743.9,123.6 746.3,123.5 748.7,123.5 751.2,123.4 753.6,123.4 756.1,123.3 758.5,123.3 761,123.2 763.5,123.2 766,123.1 768.5,123.1 771,123 773.6,123 776.1,122.9 778.7,122.9 781.3,122.9 783.9,122.8 786.5,122.8 789.2,122.7 791.9,122.7 794.5,122.7 797.3,122.6 800,122.6 802.3,122.6 804.5,122.5 806.8,122.5 809.2,122.5 811.5,122.5 813.9,122.4 816.3,122.4 818.7,122.4 821.1,122.3 823.5,122.3 826,122.3 828.4,122.2 830.9,122.2 833.4,122.2 835.9,122.1 838.4,122.1 841,122.1 843.5,122.1 846.1,122 848.6,122 851.2,122 853.8,122 856.3,121.9 858.9,121.9 861.5,121.9 864.1,121.9 866.7,121.8 869.3,121.8 871.9,121.8 874.6,121.8 877.2,121.8 879.8,121.8 882.4,121.7 885,121.7 887.6,121.7 890.2,121.7 892.8,121.7 895.4,121.7 898,121.7 900.6,121.7 903.2,121.7 905.8,121.7 908.3,121.7 910.9,121.7 913.4,121.7 916,121.7 918.5,121.7 921,121.7 923.5,121.7 926,121.7 928.5,121.7 930.9,121.8 933.4,121.8 935.8,121.8 938.2,121.8 940.6,121.9 943,121.9 945.3,121.9 947.7,122 950,122 952.7,122 955.4,122.1 958.1,122.2 960.8,122.2 963.5,122.3 966.2,122.4 969,122.4 971.7,122.5 974.4,122.6 977.1,122.7 979.8,122.7 982.5,122.8 985.2,122.9 987.9,123 990.5,123.1 993.2,123.2 995.9,123.3 998.5,123.4 1001.1,123.5 1003.8,123.6 1006.4,123.7 1008.9,123.8 1011.5,123.9 1014.1,124 1016.6,124.1 1019.1,124.3 1021.6,124.4 1024.1,124.5 1026.6,124.6 1029,124.7 1031.4,124.8 1033.8,124.9 1036.1,125 1038.5,125.2 1040.8,125.3 1043,125.4 1045.3,125.5 1047.5,125.6 1049.7,125.7 1051.8,125.8 1053.9,125.9 1056,126 1058,126.1 1060,126.2 1063.1,126.4 1066.1,126.5 1069,126.7 1071.8,126.8 1074.5,127 1077.1,127.1 1079.7,127.3 1082.2,127.4 1084.7,127.6 1087.2,127.7 1089.6,127.9 1092,128 1094.5,128.2 1096.9,128.3 1099.4,128.5 1101.9,128.7 1104.4,128.8 1107,129 1109.5,129.2 1112.1,129.3 1114.6,129.5 1117.2,129.6 1119.8,129.8 1122.4,129.9 1125,130.1 1127.6,130.3 1130.2,130.4 1132.8,130.6 1135.3,130.8 1137.9,130.9 1140.4,131.1 1142.9,131.3 1145.3,131.5 1147.7,131.7 1150,131.9 1152.3,132.1 1154.5,132.3 1157.4,132.6 1160.1,132.9 1162.8,133.2 1165.4,133.5 1168,133.8 1170.5,134.1 1173,134.4 1175.5,134.8 1178,135.2 1180.5,135.6 1183,136.1 1185.6,136.6 1188.1,137.1 1190.7,137.6 1193.3,138.2 1195.8,138.7 1198.4,139.3 1200.9,140 1203.4,140.7 1206,141.4 1208.5,142.3 1211,143.2 1213.3,144.1 1215.6,145.1 1218,146.2 1220.3,147.4 1222.7,148.6 1225.1,149.8 1227.4,151.1 1229.7,152.3 1231.9,153.6 1234.1,154.8 1236.2,156 1238.1,157.2 1240,158.3 1242.7,159.8 1245.1,161.3 1247.4,162.6 1249.5,164.1 1251.7,165.6 1254,167.5 1255.8,169.1 1257.5,170.8 1259.3,172.6 1261,174.5 1262.8,176.5 1264.6,178.6 1266.3,180.7 1268,182.8 1269.7,185 1271.4,187.1 1272.9,189.1 1274.4,191.1 1275.9,193.1 1277.4,195.2 1278.9,197.4 1280.3,199.5 1281.8,201.7 1283.2,203.8 1284.6,206 1285.9,208.1 1287.2,210.2 1288.5,212.2 1290,214.6 1291.4,216.9 1292.8,219.2 1294.2,221.5 1295.5,223.8 1296.8,226.1 1297.9,228.3 1299,230.6 1299.9,232.8 1300.9,235.6 1301.6,238.4 1302.2,241.2 1302.8,244 1303.3,246.7 1303.9,249.5 1303.5,252.1 1303.2,254.6 1302.8,257.2 1302.4,259.8 1301.8,262.4 1301,265.1 1300.2,267.3 1299.2,269.5 1298.1,271.7 1296.9,274 1295.6,276.4 1294.2,278.7 1292.8,281.1 1291.4,283.4 1289.9,285.7 1288.5,288 1287.1,290.2 1285.7,292.4 1284.2,294.6 1282.8,296.8 1281.3,299.1 1279.7,301.3 1278.1,303.4 1276.5,305.6 1274.8,307.8 1273.1,309.9 1271.4,312 1269.7,314 1267.9,316.1 1266,318.1 1264.1,320.2 1262.2,322.2 1260.3,324.2 1258.3,326.2 1256.3,328.1 1254.3,329.9 1252.4,331.7 1250.4,333.3 1248.5,334.8 1246.2,336.5 1244,337.9 1241.7,339.3 1239.5,340.5 1237.2,341.7 1234.9,342.9 1232.5,344.1 1230,345.4 1228,346.5 1225.9,347.6 1223.8,348.7 1221.7,349.9 1219.5,351 1217.3,352.2 1215.1,353.3 1212.8,354.4 1210.4,355.5 1207.9,356.5 1205.4,357.5 1202.8,358.4 1200.6,359.1 1198.4,359.7 1196.2,360.4 1193.9,361 1191.6,361.6 1189.2,362.1 1186.8,362.6 1184.4,363.1 1181.9,363.6 1179.4,364.1 1176.8,364.5 1174.2,365 1171.5,365.4 1168.8,365.8 1166,366.2 1163.2,366.6 1160.4,367 1157.5,367.4 1154.5,367.8 1152.4,368.1 1150.2,368.3 1148,368.6 1145.7,368.8 1143.4,369.1 1141.1,369.3 1138.7,369.6 1136.3,369.8 1133.9,370 1131.5,370.2 1129,370.4 1126.5,370.6 1123.9,370.8 1121.4,371 1118.8,371.1 1116.2,371.3 1113.6,371.5 1111,371.6 1108.4,371.8 1105.7,372 1103.1,372.1 1100.4,372.3 1097.7,372.4 1095,372.6 1092.3,372.7 1089.6,372.9 1086.9,373 1084.2,373.1 1081.5,373.3 1078.8,373.4 1076.1,373.6 1073.4,373.7 1070.7,373.8 1068,374 1065.3,374.1 1062.7,374.3 1060,374.4 1057.6,374.5 1055.2,374.7 1052.8,374.8 1050.4,374.9 1048,375 1045.6,375.2 1043.2,375.3 1040.7,375.4 1038.3,375.5 1035.9,375.6 1033.5,375.7 1031.1,375.9 1028.6,376 1026.2,376.1 1023.8,376.2 1021.3,376.3 1018.9,376.4 1016.4,376.5 1014,376.6 1011.5,376.7 1009.1,376.8 1006.6,376.9 1004.1,377 1001.6,377.1 999.1,377.2 996.6,377.3 994.1,377.4 991.6,377.5 989.1,377.6 986.6,377.6 984,377.7 981.5,377.8 978.9,377.9 976.3,378 973.7,378 971.2,378.1 968.5,378.2 965.9,378.2 963.3,378.3 960.7,378.4 958,378.4 955.4,378.5 952.7,378.5 950,378.6 947.7,378.6 945.3,378.7 943,378.7 940.6,378.8 938.2,378.8 935.8,378.8 933.4,378.9 930.9,378.9 928.5,379 926,379 923.5,379 921,379 918.5,379.1 916,379.1 913.4,379.1 910.9,379.1 908.3,379.2 905.8,379.2 903.2,379.2 900.6,379.2 898,379.2 895.4,379.2 892.8,379.3 890.2,379.3 887.6,379.3 885,379.3 882.4,379.3 879.8,379.3 877.2,379.3 874.6,379.3 871.9,379.3 869.3,379.3 866.7,379.3 864.1,379.3 861.5,379.3 858.9,379.3 856.3,379.3 853.8,379.3 851.2,379.3 848.6,379.3 846.1,379.3 843.5,379.3 841,379.3 838.4,379.2 835.9,379.2 833.4,379.2 830.9,379.2 828.4,379.2 826,379.2 823.5,379.1 821.1,379.1 818.7,379.1 816.3,379.1 813.9,379.1 811.5,379 809.2,379 806.8,379 804.5,379 802.3,378.9 800,378.9 797.3,378.9 794.5,378.8 791.9,378.8 789.2,378.8 786.5,378.7 783.9,378.7 781.3,378.6 778.7,378.6 776.1,378.5 773.6,378.5 771,378.5 768.5,378.4 766,378.4 763.5,378.3 761,378.2 758.5,378.2 756.1,378.1 753.6,378.1 751.2,378 748.7,378 746.3,377.9 743.9,377.8 741.4,377.7 739,377.7 736.6,377.6 734.2,377.5 731.8,377.4 729.4,377.4 726.9,377.3 724.5,377.2 722.1,377.1 719.7,377 717.2,376.9 714.8,376.8 712.4,376.7 709.9,376.6 707.4,376.5 705,376.3 702.5,376.2 700,376.1 697.5,376 695,375.8 692.6,375.7 690.1,375.6 687.7,375.4 685.3,375.3 682.9,375.2 680.5,375 678.1,374.9 675.7,374.7 673.3,374.6 670.9,374.4 668.5,374.3 666.2,374.1 663.8,373.9 661.4,373.8 659,373.6 656.6,373.4 654.2,373.3 651.8,373.1 649.4,372.9 647,372.7 644.6,372.5 642.1,372.3 639.7,372.1 637.2,371.9 634.7,371.7 632.2,371.5 629.6,371.3 627.1,371.1 624.5,370.9 621.9,370.7 619.3,370.5 616.6,370.2 613.9,370 611.2,369.8 608.4,369.5 605.7,369.3 602.9,369.1 600,368.8 597.9,368.6 595.7,368.4 593.5,368.2 591.3,368 589,367.8 586.7,367.6 584.4,367.4 582.1,367.2 579.7,366.9 577.3,366.7 574.9,366.5 572.4,366.2 570,366 567.5,365.8 565,365.5 562.5,365.3 560,365 557.4,364.8 554.9,364.5 552.3,364.3 549.7,364 547.1,363.7 544.5,363.5 541.8,363.2 539.2,362.9 536.5,362.7 533.9,362.4 531.2,362.1 528.5,361.8 525.8,361.6 523.2,361.3 520.5,361 517.8,360.7 515.1,360.4 512.4,360.2 509.7,359.9 507,359.6 504.3,359.3 501.6,359 498.9,358.7 496.2,358.5 493.6,358.2 490.9,357.9 488.2,357.6 485.6,357.3 482.9,357 480.3,356.8 477.6,356.5 475,356.2 472.4,355.9 469.8,355.7 467.2,355.4 464.7,355.1 462.1,354.8 459.6,354.6 457.1,354.3 454.6,354 452.1,353.8 449.7,353.5 447.2,353.2 444.8,353 442.4,352.7 440.1,352.5 437.7,352.2 435.4,352 433.1,351.7 430.9,351.5 428.7,351.2 426.5,351 424.3,350.8 422.2,350.5 420.1,350.3 418,350.1 415,349.8 412.1,349.5 409.3,349.2 406.5,348.9 403.7,348.6 401,348.3 398.3,348 395.7,347.7 393.1,347.5 390.6,347.2 388,346.9 385.5,346.6 383,346.4 380.6,346.1 378.2,345.9 375.7,345.6 373.3,345.3 370.9,345.1 368.6,344.8 366.2,344.6 363.8,344.3 361.4,344 359,343.8 356.6,343.5 354.2,343.2 351.8,343 349.4,342.7 346.9,342.4 344.4,342.1 341.9,341.8 339.4,341.5 336.9,341.2 334.3,340.9 331.7,340.6 329,340.3 326.6,340 324.2,339.7 321.7,339.4 319.2,339.1 316.7,338.8 314.2,338.5 311.7,338.2 309.1,337.9 306.5,337.5 303.9,337.2 301.3,336.9 298.7,336.6 296,336.2 293.4,335.9 290.7,335.6 288.1,335.2 285.4,334.9 282.7,334.5 280.1,334.2 277.4,333.9 274.7,333.5 272.1,333.2 269.4,332.8 266.8,332.5 264.1,332.1 261.5,331.8 258.9,331.5 256.3,331.1 253.7,330.8 251.2,330.4 248.6,330.1 246.1,329.8 243.6,329.4 241.1,329.1 238.7,328.8 236.2,328.5 233.8,328.1 231.5,327.8 229.1,327.5 226.8,327.2 224.6,326.9 222.3,326.6 220.1,326.3 218,326 215.1,325.6 212.2,325.2 209.4,324.8 206.6,324.5 203.9,324.1 201.3,323.8 198.7,323.4 196.1,323.1 193.6,322.7 191,322.4 188.6,322.1 186.1,321.7 183.6,321.4 181.2,321 178.8,320.7 176.3,320.3 173.9,320 171.5,319.6 169,319.2 166.5,318.8 164.1,318.4 161.5,318 159,317.6 156.5,317.2 154,316.7 151.5,316.3 149,315.9 146.5,315.4 143.9,314.9 141.4,314.5 138.9,314 136.3,313.5 133.8,313.1 131.3,312.6 128.7,312.1 126.2,311.6 123.7,311.1 121.2,310.6 118.8,310 116.3,309.5 113.9,309 111.5,308.5 109.1,308 106.8,307.4 104.5,306.9 102.2,306.3 100,305.8 97.3,305.1 94.6,304.4 92,303.7 89.4,303 86.9,302.2 84.4,301.5 81.9,300.8 79.5,300 77.1,299.3 74.6,298.5 72.2,297.7 69.8,297 67.4,296.2 64.9,295.5 62.5,294.7 60,294" fill="none" stroke="#c888c8" stroke-width="1.8"/>
 <polyline points="454.3,342.3 454.3,157.8 456.8,157.2 459.3,156.7 461.7,156.1 464.1,155.5 466.5,154.9 468.9,154.3 471.2,153.8 473.6,153.2 476,152.6 478.4,152 480.9,151.4 483.4,150.9 486,150.3 488.6,149.7 491.3,149.2 494.1,148.6 497,148.1 500,147.5 502,147.1 504.1,146.8 506.2,146.4 508.4,146 510.6,145.7 512.9,145.3 515.2,144.9 517.5,144.6 519.8,144.2 522.2,143.8 524.7,143.4 527.1,143.1 529.6,142.7 532.1,142.3 534.6,142 537.2,141.6 539.7,141.2 542.3,140.9 544.9,140.5 547.5,140.1 550.2,139.8 552.8,139.4 555.4,139.1 558.1,138.7 560.8,138.4 563.4,138.1 566.1,137.7 568.7,137.4 571.4,137.1 574.1,136.8 576.7,136.5 579.3,136.2 582,135.9 584.6,135.6 587.2,135.3 589.8,135 592.4,134.8 594.9,134.5 597.5,134.2 600,134 602.5,133.8 605,133.5 607.5,133.3 610,133.1 612.5,132.9 615,132.7 617.5,132.5 620,132.3 622.5,132.2 625,132 627.5,131.8 630,131.7 632.5,131.5 635,131.4 637.5,131.2 640,131.1 642.5,130.9 645,130.8 647.5,130.7 650,130.5 652.5,130.4 655,130.3 657.5,130.2 660,130.1 662.5,130 665,129.8 667.5,129.7 670,129.6 672.5,129.5 675,129.4 677.5,129.3 680,129.2 682.5,129.1 685,129 687.5,128.9 690,128.8 692.5,128.6 695,128.5 697.5,128.4 700,128.3 702.5,128.2 705,128.1 707.5,128 710,127.8 712.5,127.7 715,127.6 717.5,127.5 720,127.4 722.5,127.3 725,127.2 727.5,127.1 730,127 732.5,126.9 735,126.8 737.5,126.7 740,126.6 742.5,126.5 745,126.4 747.5,126.3 750,126.2 752.5,126.1 755,126 757.5,126 760,125.9 762.5,125.8 765,125.7 767.5,125.6 770,125.5 772.5,125.4 775,125.4 777.5,125.3 780,125.2 782.5,125.1 785,125 787.5,125 790,124.9 792.5,124.8 795,124.7 797.5,124.7 800,124.6 802.5,124.5 805,124.5 807.6,124.4 810.1,124.3 812.7,124.2 815.3,124.2 817.9,124.1 820.5,124 823.2,124 825.8,123.9 828.4,123.8 831,123.8 833.7,123.7 836.3,123.7 839,123.6 841.6,123.5 844.2,123.5 846.9,123.4 849.5,123.4 852.1,123.3 854.7,123.3 857.3,123.2 859.8,123.2 862.4,123.1 864.9,123.1 867.5,123 870,123 872.5,122.9 874.9,122.9 877.3,122.8 879.8,122.8 882.1,122.8 884.5,122.7 886.8,122.7 889.1,122.6 891.4,122.6 893.6,122.6 895.8,122.6 897.9,122.5 900,122.5 902.9,122.5 905.7,122.4 908.4,122.4 911,122.4 913.5,122.4 915.9,122.3 918.3,122.3 920.7,122.3 923,122.3 925.4,122.3 927.7,122.3 930,122.3 932.4,122.3 934.8,122.3 937.3,122.3 939.8,122.3 942.5,122.3 945.2,122.3 948,122.3 951,122.3 953.1,122.3 955.3,122.3 957.5,122.3 959.8,122.3 962.1,122.3 964.5,122.3 966.9,122.3 969.4,122.4 971.9,122.4 974.5,122.4 977.1,122.4 979.7,122.4 982.4,122.4 985.1,122.4 987.8,122.4 990.5,122.5 993.3,122.5 996,122.5 998.8,122.5 1001.6,122.5 1004.4,122.6 1007.2,122.6 1009.9,122.6 1012.7,122.6 1015.5,122.6 1018.2,122.7 1021,122.7 1023.7,122.7 1026.4,122.8 1029.1,122.8 1031.7,122.8 1034.3,122.8 1036.9,122.9 1039.4,122.9 1041.9,123 1044.4,123 1046.8,123 1049.1,123.1 1051.4,123.1 1053.7,123.2 1055.8,123.2 1058,123.3 1060,123.3 1063.1,123.4 1066.1,123.5 1069,123.5 1071.8,123.6 1074.5,123.7 1077.1,123.8 1079.7,123.8 1082.2,123.9 1084.7,124 1087.2,124.1 1089.6,124.2 1092,124.3 1094.5,124.4 1096.9,124.6 1099.4,124.7 1101.9,124.9 1104.4,125 1107,125.2 1109.5,125.4 1112.1,125.6 1114.6,125.8 1117.2,126 1119.8,126.2 1122.4,126.5 1125,126.7 1127.6,126.9 1130.2,127.2 1132.8,127.5 1135.4,127.7 1137.9,128 1140.4,128.3 1142.9,128.6 1145.3,128.8 1147.7,129.1 1150,129.4 1152.3,129.7 1154.5,130 1157.4,130.4 1160.2,130.8 1163,131.2 1165.7,131.5 1168.3,131.9 1170.9,132.4 1173.4,132.8 1175.9,133.2 1178.3,133.7 1180.7,134.2 1183,134.7 1185.9,135.4 1188.7,136.1 1191.3,136.8 1193.9,137.5 1196.5,138.4 1199.1,139.3 1201.8,140.4 1204.2,141.5 1206.6,142.6 1209.1,143.9 1211.5,145.2 1214,146.6 1216.4,148 1218.7,149.5 1221,151 1223.2,152.6 1225.4,154.3 1227.6,156.1 1229.6,157.9 1231.6,159.8 1233.6,161.8 1235.6,163.7 1237.5,165.7 1239.4,167.7 1241.1,169.5 1242.9,171.3 1244.6,173.2 1246.3,175 1247.9,176.9 1249.6,178.9 1251.2,180.8 1252.7,182.8 1254.2,184.8 1255.6,186.8 1257,188.9 1258.4,191.1 1259.7,193.2 1260.9,195.4 1262.2,197.6 1263.3,199.8 1264.5,202 1265.6,204.2 1266.8,206.6 1267.9,209 1268.9,211.5 1270,214 1270.9,216.4 1271.9,218.8 1272.8,221.2 1273.6,223.6 1274.6,226.4 1275.5,229.1 1276.3,231.9 1277.1,234.6 1277.7,237.1 1278.2,239.6 1278.5,241.4 1278.6,243.2 1278.7,244.8 1278.7,246.5 1278.7,248.1 1278.8,249.8 1278.7,251.4 1278.7,252.9 1278.6,254.4 1278.5,255.9 1278.4,257.6 1278.2,259.4 1277.9,261.5 1277.6,263.9 1277.2,266.5 1276.7,269.1 1276.2,271.9 1275.6,274.6 1275,277.3 1274.3,279.9 1273.6,282.3 1272.7,284.9 1271.7,287.4 1270.6,289.8 1269.5,292.1 1268.3,294.5 1267,296.9 1265.6,299.4 1264.4,301.6 1263.1,303.9 1261.7,306.2 1260.3,308.5 1258.8,310.9 1257.3,313.2 1255.7,315.5 1254.1,317.8 1252.5,320 1250.8,322.2 1249.1,324.3 1247.3,326.4 1245.5,328.4 1243.7,330.5 1241.8,332.5 1239.9,334.4 1237.9,336.3 1235.8,338.1 1233.6,339.9 1231.4,341.6 1229.4,343 1227.4,344.3 1225.3,345.6 1223.2,346.9 1221,348.1 1218.8,349.3 1216.5,350.5 1214.2,351.6 1211.8,352.7 1209.4,353.7 1206.9,354.8 1204.4,355.7 1201.8,356.7 1199.6,357.5 1197.4,358.2 1195.2,358.9 1193,359.6 1190.7,360.2 1188.4,360.8 1186,361.4 1183.6,362 1181.2,362.6 1178.8,363.1 1176.3,363.6 1173.7,364.1 1171.1,364.6 1168.5,365.1 1165.8,365.5 1163,366 1160.3,366.4 1157.4,366.9 1154.5,367.3 1152.4,367.6 1150.2,367.9 1148,368.2 1145.7,368.4 1143.5,368.7 1141.1,369 1138.8,369.2 1136.4,369.4 1134,369.7 1131.5,369.9 1129,370.1 1126.5,370.3 1124,370.5 1121.5,370.7 1118.9,370.8 1116.3,371 1113.7,371.2 1111.1,371.4 1108.4,371.5 1105.8,371.7 1103.1,371.8 1100.4,372 1097.7,372.1 1095,372.2 1092.3,372.4 1089.6,372.5 1086.9,372.6 1084.2,372.8 1081.5,372.9 1078.8,373 1076.1,373.1 1073.4,373.3 1070.7,373.4 1068,373.5 1065.3,373.6 1062.7,373.8 1060,373.9 1057.5,374 1055.1,374.1 1052.5,374.2 1050,374.3 1047.4,374.5 1044.9,374.6 1042.3,374.7 1039.6,374.7 1037,374.8 1034.3,374.9 1031.7,375 1029,375.1 1026.3,375.2 1023.6,375.3 1020.9,375.4 1018.2,375.4 1015.5,375.5 1012.8,375.6 1010.2,375.6 1007.5,375.7 1004.8,375.8 1002.1,375.8 999.4,375.9 996.8,376 994.1,376 991.5,376.1 988.9,376.1 986.3,376.2 983.7,376.2 981.2,376.3 978.7,376.3 976.2,376.4 973.7,376.4 971.3,376.5 968.9,376.5 966.5,376.6 964.2,376.6 961.9,376.6 959.6,376.7 957.4,376.7 955.2,376.7 953.1,376.8 951,376.8 948,376.8 945.2,376.9 942.5,376.9 939.8,376.9 937.3,377 934.8,377 932.4,377 930,377 927.7,377 925.4,377 923,377 920.7,377 918.3,377 915.9,377 913.5,377 911,377 908.4,377 905.7,377 902.9,377 900,377 897.9,377 895.8,377 893.6,377 891.4,377 889.1,377 886.8,377 884.5,377 882.1,377 879.8,376.9 877.3,376.9 874.9,376.9 872.5,376.9 870,376.9 867.5,376.9 864.9,376.9 862.4,376.9 859.8,376.9 857.3,376.9 854.7,376.8 852.1,376.8 849.5,376.8 846.9,376.8 844.2,376.8 841.6,376.7 839,376.7 836.3,376.7 833.7,376.7 831,376.6 828.4,376.6 825.8,376.6 823.2,376.5 820.5,376.5 817.9,376.4 815.3,376.4 812.7,376.4 810.1,376.3 807.6,376.3 805,376.2 802.5,376.2 800,376.1 797.5,376 795,376 792.5,375.9 790,375.9 787.5,375.8 785,375.7 782.5,375.6 780,375.6 777.5,375.5 775,375.4 772.5,375.4 770,375.3 767.5,375.2 765,375.1 762.5,375 760,374.9 757.5,374.9 755,374.8 752.5,374.7 750,374.6 747.5,374.5 745,374.4 742.5,374.3 740,374.2 737.5,374.1 735,374 732.5,373.9 730,373.8 727.5,373.7 725,373.5 722.5,373.4 720,373.3 717.5,373.2 715,373.1 712.5,372.9 710,372.8 707.5,372.7 705,372.6 702.5,372.4 700,372.3 697.5,372.2 695,372 692.5,371.9 690,371.8 687.5,371.6 685,371.5 682.5,371.3 680,371.2 677.5,371.1 675,370.9 672.5,370.8 670,370.6 667.5,370.5 665,370.3 662.6,370.2 660.1,370 657.6,369.9 655.1,369.7 652.6,369.6 650.1,369.4 647.6,369.2 645.1,369.1 642.6,368.9 640.1,368.7 637.6,368.5 635.1,368.3 632.6,368.2 630.1,368 627.6,367.8 625.1,367.6 622.6,367.4 620.1,367.2 617.6,366.9 615.1,366.7 612.6,366.5 610.1,366.3 607.5,366 605,365.8 602.5,365.6 600,365.3 597.5,365 594.9,364.8 592.4,364.5 589.8,364.2 587.2,364 584.5,363.7 581.9,363.4 579.2,363.1 576.6,362.8 573.9,362.5 571.2,362.2 568.5,361.8 565.8,361.5 563.1,361.2 560.4,360.9 557.7,360.5 555,360.2 552.3,359.9 549.6,359.5 546.9,359.2 544.3,358.8 541.6,358.5 539,358.1 536.4,357.8 533.8,357.4 531.2,357.1 528.6,356.7 526.1,356.4 523.6,356 521.2,355.6 518.7,355.3 516.3,354.9 514,354.6 511.7,354.2 509.4,353.8 507.2,353.5 505,353.1 502.8,352.8 500.7,352.4 498.7,352.1 496.7,351.7 493.7,351.1 490.8,350.6 488.1,350 485.4,349.5 482.8,348.9 480.3,348.3 477.8,347.8 475.4,347.2 473.1,346.6 470.7,346 468.4,345.5 466.1,344.9 463.8,344.3 461.5,343.7 459.1,343.1 456.7,342.6 454.2,342" fill="none" stroke="#561a58" stroke-width="1.3"/>
 <!-- slice markers -->
 <line x1="585.5" y1="124" x2="585.5" y2="133" stroke="#d4d4d4" stroke-width="1" stroke-dasharray="3 1.3"/>
 <line x1="585.5" y1="134" x2="585.5" y2="250" stroke="#cc4a4a" stroke-width="1.6"/>
 <line x1="585.5" y1="250" x2="585.5" y2="374" stroke="#d4d4d4" stroke-width="1" stroke-dasharray="3 1.3"/>
 <line x1="949" y1="112" x2="949" y2="250" stroke="#a8a8d8" stroke-width="1.2" stroke-dasharray="3 1.5"/>
 <line x1="949" y1="250" x2="949" y2="386.5" stroke="#d8d8d8" stroke-width="1" stroke-dasharray="3 1.3"/>
 <line x1="1319.5" y1="139" x2="1319.5" y2="360.5" stroke="#e0e0e0" stroke-width="1" stroke-dasharray="3 1.3"/>
 <line x1="1721.5" y1="218.5" x2="1721.5" y2="281" stroke="#d8d8d8" stroke-width="1" stroke-dasharray="3 1.3"/>
 <line x1="454.5" y1="158" x2="454.5" y2="250" stroke="#7878b8" stroke-width="1.4"/>
 <line x1="454.5" y1="250" x2="454.5" y2="342" stroke="#561a58" stroke-width="1.3"/>
 <line x1="1222.5" y1="153" x2="1222.5" y2="250" stroke="#7878b8" stroke-width="1.4"/>
 <line x1="1274.5" y1="225" x2="1274.5" y2="250" stroke="#7878b8" stroke-width="1.2"/>
 <g fill="#fff" stroke="#222" stroke-width="1">
  <circle cx="939" cy="112.3" r="2.6"/><circle cx="951.4" cy="122.3" r="2.6"/>
  <circle cx="454.3" cy="157.8" r="2.6"/><circle cx="1223" cy="152.6" r="2.6"/>
  <circle cx="1279" cy="249.8" r="2.6"/><circle cx="1808.7" cy="249.4" r="2.6"/>
 </g>
 <!-- axis -->
 <path d="M18 394.5V365M13.5 370.5l4.5-5.5l4.5 5.5" fill="none" stroke="#30c030" stroke-width="1"/>
 <path d="M18 394.5H48.5M43 389.5l5.5 5l-5.5 5" fill="none" stroke="#e03030" stroke-width="1"/>
 <text x="13" y="359" font-size="9.5" fill="#40c040" font-family="Liberation Sans">Y</text>
 <text x="52" y="398.5" font-size="9.5" fill="#d03030" font-family="Liberation Sans">X</text>
</svg>

<div class="a" style="left:1888px;top:91px;width:8px;height:318px;background:linear-gradient(90deg,#eeeeee 0,#f1f1f1 6px,#fdfdfd 6px)"></div>
<!-- ===== PANEL 2: cross section ===== -->
<div class="a" style="left:2px;top:416px;width:1894px;height:323px;background:#fff"></div>
<div class="a" style="left:2px;top:739px;width:1894px;height:1px;background:#e4e4e4"></div>
<div class="a" style="left:2px;top:740px;width:1894px;height:5px;background:#fbfbfb"></div>
<div class="a" style="left:2px;top:745px;width:1894px;height:1px;background:#7a7a7a"></div>
<div class="a" style="left:2px;top:746px;width:1894px;height:1px;background:#6a6a6a"></div>
<div class="a" style="left:2px;top:747px;width:1894px;height:1px;background:#f4f4f4"></div>
<svg class="a" style="left:0;top:0" width="1905" height="750">
 <line x1="2" y1="718.5" x2="1896" y2="718.5" stroke="#a8a8a8" stroke-width="1"/>
 <line x1="2" y1="724" x2="1896" y2="724" stroke="#dadada" stroke-width="1"/>
 <polygon points="467,465 465.9,467.5 464.7,469.9 463.6,472.3 462.5,474.8 461.4,477.4 460.3,480 459.4,482.3 458.5,484.8 457.7,487.3 456.8,489.8 456,492.3 455.2,494.9 454.4,497.5 453.7,500 453,502.5 452.4,505 451.7,507.5 451.1,510 450.5,512.5 450,515 449.5,517.5 449,520 448.6,522.5 448.2,525 447.8,527.5 447.5,530 447.2,532.5 446.9,535 446.6,537.5 446.3,540 446,542.5 445.8,545 445.6,547.5 445.4,550 445.2,552.5 445,555 444.8,557.5 444.6,560 444.4,562.5 444.2,565 444,567.5 443.9,570 443.7,572.5 443.5,575 443.4,577.5 443.3,580 443.2,582.5 443.1,585.1 443.1,587.6 443.1,590.2 443,592.7 443,595.2 443,597.6 443,600 443,602.6 443,605.2 443,607.6 443,610.1 443,612.5 443.1,615 443.2,617.5 443.3,619.9 443.5,622.4 443.6,624.8 443.8,627.4 444,630 444.2,632.4 444.3,634.8 444.5,637.3 444.7,639.8 444.9,642.4 445.2,645 445.5,647.5 445.9,650 446.4,652.5 446.9,655 447.5,657.5 448.1,660 448.8,662.5 449.5,665 450.2,667.5 451,670 451.8,672.5 452.7,675.1 453.7,677.7 454.6,680.2 455.6,682.8 456.7,685.2 457.7,687.7 458.8,690 460.1,692.7 461.3,695.3 462.6,697.8 464,700.3 465.5,702.7 467.1,705 468.9,707.2 470.9,709.4 473,711.4 475.1,713.4 477.2,715.4 479.3,717.5 1362.4,717.5 1364.5,715.4 1366.6,713.4 1368.7,711.4 1370.8,709.4 1372.8,707.2 1374.6,705 1376.2,702.7 1377.7,700.3 1379.1,697.8 1380.4,695.3 1381.6,692.7 1382.9,690 1384,687.7 1385,685.2 1386.1,682.8 1387.1,680.2 1388,677.7 1389,675.1 1389.9,672.5 1390.7,670 1391.5,667.5 1392.2,665 1392.9,662.5 1393.6,660 1394.2,657.5 1394.8,655 1395.3,652.5 1395.8,650 1396.2,647.5 1396.5,645 1396.8,642.4 1397,639.8 1397.2,637.3 1397.4,634.8 1397.5,632.4 1397.7,630 1397.9,627.4 1398.1,624.8 1398.2,622.4 1398.4,619.9 1398.5,617.5 1398.6,615 1398.7,612.5 1398.7,610.1 1398.7,607.6 1398.7,605.2 1398.7,602.6 1398.7,600 1398.7,597.6 1398.7,595.2 1398.7,592.7 1398.6,590.2 1398.6,587.6 1398.6,585.1 1398.5,582.5 1398.4,580 1398.3,577.5 1398.2,575 1398,572.5 1397.8,570 1397.7,567.5 1397.5,565 1397.3,562.5 1397.1,560 1396.9,557.5 1396.7,555 1396.5,552.5 1396.3,550 1396.1,547.5 1395.9,545 1395.7,542.5 1395.4,540 1395.1,537.5 1394.8,535 1394.5,532.5 1394.2,530 1393.9,527.5 1393.5,525 1393.1,522.5 1392.7,520 1392.2,517.5 1391.7,515 1391.2,512.5 1390.6,510 1390,507.5 1389.3,505 1388.7,502.5 1388,500 1387.3,497.5 1386.5,494.9 1385.7,492.3 1384.9,489.8 1384,487.3 1383.2,484.8 1382.3,482.3 1381.4,480 1380.3,477.4 1379.2,474.8 1378.1,472.3 1377,469.9 1375.8,467.5 1374.7,465" fill="#808080"/>
 <polyline points="485,465.5 488,465.4 491.1,465.3 494.1,465.3 496.8,465.5 498.7,465.8 500.4,466.2 502,466.8 503.5,467.6 505.1,468.8 506.6,470.2 508.1,471.8 509.4,473.4 510.5,475 511.5,476.8 512.5,478.5 513.6,480.2 514.9,481.9 516.4,483.7 517.9,485.3 519.5,486.9 521.2,488.4 523,489.8 524.9,491.2 527,492.4 529.1,493.5 531.4,494.5 533.7,495.4 536.2,496.2 538.8,497 541.4,497.7 544,498.3 546.8,498.9 549.6,499.4 552.6,499.8 555.6,500.2 557.9,500.5 560.1,500.7 562.4,500.8 564.8,501 567.2,501.1 569.7,501.2 572.3,501.3 575,501.4 577.8,501.5 580.8,501.6 582.9,501.7 584.9,501.7 587.1,501.8 589.3,501.8 591.5,501.9 593.7,501.9 596.1,501.9 598.4,502 600.8,502 603.3,502 605.8,502.1 608.3,502.1 610.9,502.1 613.6,502.1 616.3,502.1 619.1,502.1 621.9,502.1 624.7,502.2 627.7,502.2 630.7,502.2 633.7,502.2 636.8,502.2 640,502.2 641.9,502.2 643.9,502.2 645.9,502.2 647.9,502.2 650,502.2 652.1,502.2 654.2,502.2 656.4,502.2 658.6,502.2 660.9,502.2 663.2,502.2 665.5,502.2 667.8,502.2 670.2,502.2 672.6,502.2 675,502.2 677.5,502.2 680,502.2 682.5,502.1 685,502.1 687.5,502.1 690.1,502.1 692.7,502.1 695.3,502.1 697.9,502.1 700.5,502.1 703.2,502 705.8,502 708.5,502 711.1,502 713.8,502 716.5,502 719.2,502 721.9,501.9 724.6,501.9 727.3,501.9 730.1,501.9 732.8,501.9 735.5,501.9 738.2,501.8 740.9,501.8 743.6,501.8 746.3,501.8 749,501.8 751.7,501.8 754.4,501.7 757.1,501.7 759.7,501.7 762.4,501.7 765,501.7 767.7,501.7 770.3,501.7 772.9,501.6 775.4,501.6 778,501.6 780.5,501.6 783.1,501.6 785.5,501.6 788,501.6 790.5,501.5 792.9,501.5 795.3,501.5 797.7,501.5 800,501.5 802.7,501.5 805.4,501.5 808,501.5 810.7,501.5 813.3,501.4 815.9,501.4 818.5,501.4 821.1,501.4 823.7,501.4 826.2,501.4 828.8,501.4 831.3,501.3 833.9,501.3 836.4,501.3 838.9,501.3 841.4,501.3 843.9,501.3 846.4,501.3 848.9,501.2 851.4,501.2 853.9,501.2 856.4,501.2 858.8,501.2 861.3,501.2 863.8,501.2 866.2,501.2 868.7,501.1 871.2,501.1 873.6,501.1 876.1,501.1 878.5,501.1 881,501.1 883.5,501.1 885.9,501.1 888.4,501.1 890.9,501 893.3,501 895.8,501 898.3,501 900.8,501 903.3,501 905.8,501 908.3,501 910.8,501 913.4,501 915.9,501 918.4,501 921,501 923.5,501 926,501 928.5,501 931,501 933.5,501 936,501 938.5,501 941.1,501 943.6,501 946.1,501 948.7,501.1 951.2,501.1 953.7,501.1 956.3,501.1 958.8,501.1 961.4,501.1 963.9,501.1 966.5,501.1 969,501.1 971.6,501.2 974.1,501.2 976.7,501.2 979.2,501.2 981.8,501.2 984.3,501.2 986.9,501.2 989.4,501.3 992,501.3 994.5,501.3 997.1,501.3 999.6,501.3 1002.2,501.3 1004.7,501.4 1007.3,501.4 1009.8,501.4 1012.4,501.4 1014.9,501.4 1017.4,501.4 1020,501.4 1022.5,501.5 1025,501.5 1027.5,501.5 1030,501.5 1032.6,501.5 1035.1,501.5 1037.6,501.5 1040.1,501.6 1042.6,501.6 1045,501.6 1047.5,501.6 1050,501.6 1052.6,501.6 1055.2,501.6 1057.8,501.6 1060.4,501.6 1063.1,501.7 1065.7,501.7 1068.4,501.7 1071.1,501.7 1073.8,501.7 1076.5,501.7 1079.2,501.7 1081.9,501.7 1084.7,501.7 1087.4,501.7 1090.1,501.8 1092.8,501.8 1095.6,501.8 1098.3,501.8 1101,501.8 1103.7,501.8 1106.4,501.8 1109.1,501.8 1111.7,501.8 1114.4,501.8 1117,501.8 1119.6,501.9 1122.2,501.9 1124.8,501.9 1127.4,501.9 1129.9,501.9 1132.4,501.9 1134.9,501.9 1137.4,501.9 1139.8,501.9 1142.2,501.9 1144.6,501.9 1146.9,501.9 1149.2,501.9 1151.5,502 1153.7,502 1155.9,502 1158,502 1160.1,502 1162.1,502 1164.1,502 1166.1,502 1168,502 1171.2,502 1174.3,502 1177.2,502 1180,502.1 1182.7,502.1 1185.3,502.1 1187.8,502.1 1190.3,502.1 1192.8,502.1 1195.2,502.1 1197.6,502.1 1200,502.1 1202.4,502.1 1204.9,502.1 1207.4,502.1 1210,502.1 1212.6,502.1 1215.3,502.1 1218,502 1220.7,502 1223.4,502 1226.1,501.9 1228.8,501.9 1231.5,501.8 1234.1,501.8 1236.8,501.7 1239.4,501.7 1242,501.6 1244.6,501.5 1247.1,501.5 1249.6,501.4 1252,501.3 1254.9,501.2 1257.7,501.1 1260.5,501 1263.3,500.8 1266,500.7 1268.7,500.6 1271.3,500.4 1273.9,500.2 1276.4,500 1278.9,499.8 1281.4,499.6 1284.2,499.3 1287,499.1 1289.8,498.8 1292.5,498.5 1295.1,498.1 1297.6,497.7 1300.1,497.3 1302.4,496.7 1305.2,495.9 1307.9,494.9 1310.4,493.9 1312.7,492.8 1315,491.6 1317.3,490.3 1319.5,488.9 1321.5,487.4 1323.4,485.7 1325.1,483.7 1326.7,481.4 1328.1,479.1 1329.7,476.9 1331.2,475 1332.7,473.1 1334.3,471.3 1336,469.8 1337.6,468.6 1339.3,467.6 1341.1,466.7 1342.8,466 1344.3,465.6 1345.7,465.3 1347.2,465.2 1348.7,465.1 1350.5,465.1 1352.4,465.2 1354.3,465.3 1356.2,465.4" fill="none" stroke="#581a5a" stroke-width="1.3"/>
 <g fill="#fff" stroke="#6a1a6a" stroke-width="1">
  <circle cx="921" cy="501" r="2.3"/><circle cx="1168" cy="502" r="2.3"/>
  <circle cx="1329.6" cy="476.7" r="2.3"/><circle cx="1355.8" cy="465.5" r="2.3"/>
 </g>
 <path d="M18.5 725V696M13.5 701l5-5l5 5" fill="none" stroke="#1a1a60" stroke-width="1.1"/>
 <path d="M18.5 725H48M43.5 720.5l4.5 4.5l-4.5 4.5" fill="none" stroke="#30c030" stroke-width="1.2"/>
 <text x="13.5" y="690.8" font-size="9.5" fill="#1a1a60" font-family="Liberation Sans">Z</text>
 <text x="52.5" y="730" font-size="9" fill="#60c060" font-family="Liberation Sans">Y</text>
</svg>

<!-- ===== PANEL 3: profile ===== -->
<div class="a" style="left:2px;top:748px;width:1894px;height:276px;background:#ebebeb"></div>
<svg class="a" style="left:0;top:0" width="1905" height="1030">
 <polygon points="57,833.9 60,833.7 63,833.4 66,833.2 69,832.9 72,832.6 75,832.4 78,832.1 81,831.9 84,831.7 87,831.4 90,831.2 93,831 96,830.8 99,830.6 102,830.4 105,830.2 108,830 111,829.8 114,829.6 117,829.4 120,829.2 123,829 126,828.8 129,828.7 132,828.5 135,828.3 138,828.1 141,828 144,827.8 147,827.6 150,827.5 153,827.3 156,827.2 159,827 162,826.9 165,826.7 168,826.6 171,826.4 174,826.3 177,826.2 180,826.1 183,825.9 186,825.8 189,825.7 192,825.6 195,825.5 198,825.4 201,825.3 204,825.2 207,825.1 210,825 213,824.9 216,824.8 219,824.7 222,824.6 225,824.5 228,824.5 231,824.4 234,824.3 237,824.2 240,824.1 243,824 246,823.9 249,823.8 252,823.8 255,823.7 258,823.6 261,823.5 264,823.4 267,823.4 270,823.3 273,823.2 276,823.1 279,823.1 282,823 285,822.9 288,822.8 291,822.8 294,822.7 297,822.6 300,822.6 303,822.5 306,822.4 309,822.4 312,822.3 315,822.2 318,822.2 321,822.1 324,822 327,822 330,821.9 333,821.8 336,821.8 339,821.7 342,821.7 345,821.6 348,821.5 351,821.5 354,821.4 357,821.4 360,821.3 363,821.3 366,821.2 369,821.1 372,821.1 375,821 378,821 381,820.9 384,820.9 387,820.8 390,820.8 393,820.7 396,820.7 399,820.6 402,820.6 405,820.5 408,820.5 411,820.4 414,820.4 417,820.3 420,820.3 423,820.2 426,820.2 429,820.1 432,820.1 435,820 438,820 441,819.9 444,819.9 447,819.8 450,819.8 453,819.7 456,819.7 459,819.6 462,819.6 465,819.5 468,819.5 471,819.5 474,819.4 477,819.4 480,819.3 483,819.3 486,819.2 489,819.2 492,819.1 495,819.1 498,819.1 501,819 504,819 507,818.9 510,818.9 513,818.8 516,818.8 519,818.8 522,818.7 525,818.7 528,818.6 531,818.6 534,818.6 537,818.5 540,818.5 543,818.5 546,818.4 549,818.4 552,818.3 555,818.3 558,818.3 561,818.2 564,818.2 567,818.2 570,818.1 573,818.1 576,818.1 579,818 582,818 585,818 588,818 591,817.9 594,817.9 597,817.9 600,817.8 603,817.8 606,817.8 609,817.8 612,817.7 615,817.7 618,817.7 621,817.6 624,817.6 627,817.6 630,817.6 633,817.6 636,817.5 639,817.5 642,817.5 645,817.5 648,817.4 651,817.4 654,817.4 657,817.4 660,817.4 663,817.3 666,817.3 669,817.3 672,817.3 675,817.3 678,817.2 681,817.2 684,817.2 687,817.2 690,817.2 693,817.2 696,817.1 699,817.1 702,817.1 705,817.1 708,817.1 711,817.1 714,817 717,817 720,817 723,817 726,817 729,817 732,816.9 735,816.9 738,816.9 741,816.9 744,816.9 747,816.9 750,816.9 753,816.8 756,816.8 759,816.8 762,816.8 765,816.8 768,816.8 771,816.8 774,816.7 777,816.7 780,816.7 783,816.7 786,816.7 789,816.7 792,816.7 795,816.7 798,816.6 801,816.6 804,816.6 807,816.6 810,816.6 813,816.6 816,816.6 819,816.6 822,816.5 825,816.5 828,816.5 831,816.5 834,816.5 837,816.5 840,816.5 843,816.5 846,816.4 849,816.4 852,816.4 855,816.4 858,816.4 861,816.4 864,816.4 867,816.4 870,816.4 873,816.3 876,816.3 879,816.3 882,816.3 885,816.3 888,816.3 891,816.3 894,816.3 897,816.2 900,816.2 903,816.2 906,816.2 909,816.2 912,816.2 915,816.2 918,816.2 921,816.2 924,816.1 927,816.1 930,816.1 933,816.1 936,816.1 939,816.1 942,816.1 945,816.1 948,816 951,816 954,816 957,816 960,816 963,816 966,816 969,815.9 972,815.9 975,815.9 978,815.9 981,815.9 984,815.9 987,815.9 990,815.8 993,815.8 996,815.8 999,815.8 1002,815.8 1005,815.8 1008,815.8 1011,815.7 1014,815.7 1017,815.7 1020,815.7 1023,815.7 1026,815.7 1029,815.7 1032,815.6 1035,815.6 1038,815.6 1041,815.6 1044,815.6 1047,815.6 1050,815.5 1053,815.5 1056,815.5 1059,815.5 1062,815.5 1065,815.5 1068,815.5 1071,815.4 1074,815.4 1077,815.4 1080,815.4 1083,815.4 1086,815.4 1089,815.3 1092,815.3 1095,815.3 1098,815.3 1101,815.3 1104,815.3 1107,815.3 1110,815.2 1113,815.2 1116,815.2 1119,815.2 1122,815.2 1125,815.2 1128,815.1 1131,815.1 1134,815.1 1137,815.1 1140,815.1 1143,815.1 1146,815.1 1149,815 1152,815 1155,815 1158,815 1161,815 1164,815 1167,814.9 1170,814.9 1173,814.9 1176,814.9 1179,814.9 1182,814.9 1185,814.8 1188,814.8 1191,814.8 1194,814.8 1197,814.8 1200,814.8 1203,814.8 1206,814.7 1209,814.7 1212,814.7 1215,814.7 1218,814.7 1221,814.7 1224,814.6 1227,814.6 1230,814.6 1233,814.6 1236,814.6 1239,814.6 1242,814.5 1245,814.5 1248,814.5 1251,814.5 1254,814.5 1257,814.5 1260,814.4 1263,814.4 1266,814.4 1269,814.4 1272,814.4 1275,814.4 1278,814.3 1281,814.3 1284,814.3 1287,814.3 1287,814.3 1284,814.4 1281,814.7 1278,815.1 1275,815.7 1272,816.3 1269,816.9 1266,817.5 1263,818.1 1260,818.7 1257,819.3 1254,820 1251,820.7 1248,821.4 1245,822.1 1242,822.8 1239,823.4 1236,824 1233,824.5 1230,825 1227,825.5 1224,826 1221,826.4 1218,826.9 1215,827.3 1212,827.6 1209,828 1206,828.3 1203,828.6 1200,828.9 1197,829.1 1194,829.4 1191,829.6 1188,829.8 1185,830 1182,830.2 1179,830.4 1176,830.5 1173,830.7 1170,830.9 1167,831 1164,831.2 1161,831.4 1158,831.5 1155,831.6 1152,831.7 1149,831.8 1146,831.9 1143,832 1140,832 1137,832 1134,832.1 1131,832.1 1128,832.1 1125,832.1 1122,832.1 1119,832.2 1116,832.2 1113,832.2 1110,832.2 1107,832.2 1104,832.2 1101,832.2 1098,832.2 1095,832.2 1092,832.1 1089,832.1 1086,832 1083,831.9 1080,831.8 1077,831.7 1074,831.6 1071,831.5 1068,831.3 1065,831.2 1062,831.1 1059,831 1056,830.9 1053,830.9 1050,830.8 1047,830.7 1044,830.7 1041,830.6 1038,830.6 1035,830.6 1032,830.5 1029,830.5 1026,830.4 1023,830.4 1020,830.3 1017,830.3 1014,830.3 1011,830.2 1008,830.2 1005,830.1 1002,830.1 999,830.1 996,830 993,830 990,830 987,829.9 984,829.9 981,829.9 978,829.8 975,829.8 972,829.8 969,829.8 966,829.7 963,829.7 960,829.7 957,829.6 954,829.6 951,829.6 948,829.6 945,829.5 942,829.5 939,829.5 936,829.5 933,829.4 930,829.4 927,829.4 924,829.4 921,829.3 918,829.3 915,829.3 912,829.3 909,829.3 906,829.2 903,829.2 900,829.2 897,829.2 894,829.1 891,829.1 888,829.1 885,829.1 882,829.1 879,829 876,829 873,829 870,829 867,829 864,828.9 861,828.9 858,828.9 855,828.9 852,828.9 849,828.8 846,828.8 843,828.8 840,828.8 837,828.8 834,828.7 831,828.7 828,828.7 825,828.7 822,828.7 819,828.7 816,828.6 813,828.6 810,828.6 807,828.6 804,828.6 801,828.6 798,828.5 795,828.5 792,828.5 789,828.5 786,828.5 783,828.5 780,828.4 777,828.4 774,828.4 771,828.4 768,828.4 765,828.4 762,828.3 759,828.3 756,828.3 753,828.3 750,828.3 747,828.3 744,828.2 741,828.2 738,828.2 735,828.2 732,828.2 729,828.2 726,828.2 723,828.1 720,828.1 717,828.1 714,828.1 711,828.1 708,828.1 705,828 702,828 699,828 696,828 693,828 690,828 687,828 684,827.9 681,827.9 678,827.9 675,827.9 672,827.9 669,827.9 666,827.8 663,827.8 660,827.8 657,827.8 654,827.8 651,827.8 648,827.7 645,827.7 642,827.7 639,827.7 636,827.7 633,827.7 630,827.6 627,827.6 624,827.6 621,827.6 618,827.6 615,827.6 612,827.5 609,827.5 606,827.5 603,827.5 600,827.5 597,827.5 594,827.5 591,827.4 588,827.4 585,827.4 582,827.4 579,827.4 576,827.4 573,827.3 570,827.3 567,827.3 564,827.3 561,827.3 558,827.3 555,827.3 552,827.2 549,827.2 546,827.2 543,827.2 540,827.2 537,827.2 534,827.1 531,827.1 528,827.1 525,827.1 522,827.1 519,827.1 516,827 513,827 510,827 507,827 504,827 501,826.9 498,826.9 495,826.9 492,826.9 489,826.9 486,826.8 483,826.8 480,826.8 477,826.8 474,826.7 471,826.7 468,826.7 465,826.7 462,826.7 459,826.6 456,826.6 453,826.6 450,826.6 447,826.6 444,826.5 441,826.5 438,826.5 435,826.5 432,826.5 429,826.5 426,826.5 423,826.5 420,826.5 417,826.5 414,826.5 411,826.5 408,826.5 405,826.5 402,826.5 399,826.5 396,826.5 393,826.5 390,826.5 387,826.5 384,826.5 381,826.5 378,826.5 375,826.6 372,826.6 369,826.6 366,826.6 363,826.6 360,826.6 357,826.6 354,826.6 351,826.6 348,826.6 345,826.6 342,826.6 339,826.6 336,826.7 333,826.7 330,826.7 327,826.7 324,826.7 321,826.7 318,826.7 315,826.7 312,826.7 309,826.8 306,826.8 303,826.8 300,826.8 297,826.8 294,826.8 291,826.9 288,826.9 285,826.9 282,827 279,827 276,827.1 273,827.1 270,827.2 267,827.2 264,827.3 261,827.4 258,827.4 255,827.5 252,827.6 249,827.7 246,827.8 243,827.9 240,828 237,828.1 234,828.2 231,828.3 228,828.4 225,828.5 222,828.6 219,828.8 216,828.9 213,829 210,829.2 207,829.3 204,829.4 201,829.6 198,829.7 195,829.9 192,830 189,830.2 186,830.4 183,830.6 180,830.8 177,831.1 174,831.4 171,831.8 168,832.1 165,832.5 162,832.9 159,833.3 156,833.7 153,834.1 150,834.5 147,834.9 144,835.2 141,835.6 138,836 135,836.3 132,836.7 129,837.1 126,837.5 123,837.9 120,838.3 117,838.7 114,839.1 111,839.6 108,840.1 105,840.6 102,841.1 99,841.7 96,842.3 93,843 90,843.7 87,844.4 84,845.2 81,846.1 78,847 75,847.9 72,848.8 69,849.8 66,850.9 63,852.1 60,853.4 57,854.7" fill="#f4f1f4"/>
 <line x1="47" y1="896.5" x2="1808" y2="896.5" stroke="#a8a8a8" stroke-width="1"/>
 <polygon points="56.4,855 59.4,853.7 62.4,852.4 65.4,851.2 68.4,850 71.4,849 74.4,848.1 77.4,847.2 80.4,846.3 83.4,845.4 86.4,844.6 89.4,843.8 92.4,843.1 95.4,842.4 98.4,841.8 101.4,841.2 104.4,840.7 107.4,840.2 110.4,839.7 113.4,839.2 116.4,838.8 119.4,838.4 122.4,837.9 125.4,837.5 128.4,837.2 131.4,836.8 134.4,836.4 137.4,836 140.4,835.7 143.4,835.3 146.4,834.9 149.4,834.6 152.4,834.2 155.4,833.8 158.4,833.4 161.4,833 164.4,832.6 167.4,832.2 170.4,831.8 173.4,831.5 176.4,831.2 179.4,830.9 182.4,830.6 185.4,830.4 188.4,830.2 191.4,830.1 194.4,829.9 197.4,829.8 200.4,829.6 203.4,829.5 206.4,829.3 209.4,829.2 212.4,829 215.4,828.9 218.4,828.8 221.4,828.7 224.4,828.5 227.4,828.4 230.4,828.3 233.4,828.2 236.4,828.1 239.4,828 242.4,827.9 245.4,827.8 248.4,827.7 251.4,827.6 254.4,827.5 257.4,827.5 260.4,827.4 263.4,827.3 266.4,827.2 269.4,827.2 272.4,827.1 275.4,827.1 278.4,827 281.4,827 284.4,826.9 287.4,826.9 290.4,826.9 293.4,826.8 296.4,826.8 299.4,826.8 302.4,826.8 305.4,826.8 308.4,826.8 311.4,826.8 314.4,826.7 317.4,826.7 320.4,826.7 323.4,826.7 326.4,826.7 329.4,826.7 332.4,826.7 335.4,826.7 338.4,826.7 341.4,826.6 344.4,826.6 347.4,826.6 350.4,826.6 353.4,826.6 356.4,826.6 359.4,826.6 362.4,826.6 365.4,826.6 368.4,826.6 371.4,826.6 374.4,826.6 377.4,826.5 380.4,826.5 383.4,826.5 386.4,826.5 389.4,826.5 392.4,826.5 395.4,826.5 398.4,826.5 401.4,826.5 404.4,826.5 407.4,826.5 410.4,826.5 413.4,826.5 416.4,826.5 419.4,826.5 422.4,826.5 425.4,826.5 428.4,826.5 431.4,826.5 434.4,826.5 437.4,826.5 440.4,826.5 443.4,826.5 446.4,826.6 449.4,826.6 452.4,826.6 455.4,826.6 458.4,826.6 461.4,826.6 464.4,826.7 467.4,826.7 470.4,826.7 473.4,826.7 476.4,826.8 479.4,826.8 482.4,826.8 485.4,826.8 488.4,826.9 491.4,826.9 494.4,826.9 497.4,826.9 500.4,826.9 503.4,827 506.4,827 509.4,827 512.4,827 515.4,827 518.4,827.1 521.4,827.1 524.4,827.1 527.4,827.1 530.4,827.1 533.4,827.1 536.4,827.2 539.4,827.2 542.4,827.2 545.4,827.2 548.4,827.2 551.4,827.2 554.4,827.2 557.4,827.3 560.4,827.3 563.4,827.3 566.4,827.3 569.4,827.3 572.4,827.3 575.4,827.4 578.4,827.4 581.4,827.4 584.4,827.4 587.4,827.4 590.4,827.4 593.4,827.5 596.4,827.5 599.4,827.5 602.4,827.5 605.4,827.5 608.4,827.5 611.4,827.5 614.4,827.6 617.4,827.6 620.4,827.6 623.4,827.6 626.4,827.6 629.4,827.6 632.4,827.7 635.4,827.7 638.4,827.7 641.4,827.7 644.4,827.7 647.4,827.7 650.4,827.8 653.4,827.8 656.4,827.8 659.4,827.8 662.4,827.8 665.4,827.8 668.4,827.9 671.4,827.9 674.4,827.9 677.4,827.9 680.4,827.9 683.4,827.9 686.4,827.9 689.4,828 692.4,828 695.4,828 698.4,828 701.4,828 704.4,828 707.4,828.1 710.4,828.1 713.4,828.1 716.4,828.1 719.4,828.1 722.4,828.1 725.4,828.2 728.4,828.2 731.4,828.2 734.4,828.2 737.4,828.2 740.4,828.2 743.4,828.2 746.4,828.3 749.4,828.3 752.4,828.3 755.4,828.3 758.4,828.3 761.4,828.3 764.4,828.4 767.4,828.4 770.4,828.4 773.4,828.4 776.4,828.4 779.4,828.4 782.4,828.4 785.4,828.5 788.4,828.5 791.4,828.5 794.4,828.5 797.4,828.5 800.4,828.5 803.4,828.6 806.4,828.6 809.4,828.6 812.4,828.6 815.4,828.6 818.4,828.7 821.4,828.7 824.4,828.7 827.4,828.7 830.4,828.7 833.4,828.7 836.4,828.8 839.4,828.8 842.4,828.8 845.4,828.8 848.4,828.8 851.4,828.9 854.4,828.9 857.4,828.9 860.4,828.9 863.4,828.9 866.4,828.9 869.4,829 872.4,829 875.4,829 878.4,829 881.4,829 884.4,829.1 887.4,829.1 890.4,829.1 893.4,829.1 896.4,829.2 899.4,829.2 902.4,829.2 905.4,829.2 908.4,829.2 911.4,829.3 914.4,829.3 917.4,829.3 920.4,829.3 923.4,829.4 926.4,829.4 929.4,829.4 932.4,829.4 935.4,829.5 938.4,829.5 941.4,829.5 944.4,829.5 947.4,829.6 950.4,829.6 953.4,829.6 956.4,829.6 959.4,829.7 962.4,829.7 965.4,829.7 968.4,829.8 971.4,829.8 974.4,829.8 977.4,829.8 980.4,829.9 983.4,829.9 986.4,829.9 989.4,830 992.4,830 995.4,830 998.4,830.1 1001.4,830.1 1004.4,830.1 1007.4,830.2 1010.4,830.2 1013.4,830.3 1016.4,830.3 1019.4,830.3 1022.4,830.4 1025.4,830.4 1028.4,830.5 1031.4,830.5 1034.4,830.5 1037.4,830.6 1040.4,830.6 1043.4,830.7 1046.4,830.7 1049.4,830.8 1052.4,830.8 1055.4,830.9 1058.4,831 1061.4,831.1 1064.4,831.2 1067.4,831.3 1070.4,831.4 1073.4,831.5 1076.4,831.7 1079.4,831.8 1082.4,831.9 1085.4,832 1088.4,832 1091.4,832.1 1094.4,832.2 1097.4,832.2 1100.4,832.2 1103.4,832.2 1106.4,832.2 1109.4,832.2 1112.4,832.2 1115.4,832.2 1118.4,832.2 1121.4,832.1 1124.4,832.1 1127.4,832.1 1130.4,832.1 1133.4,832.1 1136.4,832 1139.4,832 1142.4,832 1145.4,831.9 1148.4,831.9 1151.4,831.8 1154.4,831.7 1157.4,831.5 1160.4,831.4 1163.4,831.2 1166.4,831.1 1169.4,830.9 1172.4,830.7 1175.4,830.6 1178.4,830.4 1181.4,830.2 1184.4,830 1187.4,829.8 1190.4,829.6 1193.4,829.4 1196.4,829.2 1199.4,828.9 1202.4,828.6 1205.4,828.4 1208.4,828 1211.4,827.7 1214.4,827.3 1217.4,826.9 1220.4,826.5 1223.4,826.1 1226.4,825.6 1229.4,825.1 1232.4,824.6 1235.4,824.1 1238.4,823.6 1241.4,822.9 1244.4,822.3 1247.4,821.6 1250.4,820.8 1253.4,820.1 1256.4,819.4 1259.4,818.8 1262.4,818.2 1265.4,817.6 1268.4,817 1271.4,816.4 1274.4,815.8 1277.4,815.2 1280.4,814.8 1283.4,814.5 1286.4,814.3 1289.4,814.3 1292.4,814.2 1295.4,814.2 1298.4,814.2 1301.4,814.1 1304.4,814.1 1307.4,814.1 1310.4,814 1313.4,814 1316.4,814 1319.4,813.9 1322.4,813.9 1325.4,813.9 1328.4,813.9 1331.4,813.8 1334.4,813.8 1337.4,813.8 1340.4,813.8 1343.4,813.8 1346.4,813.7 1349.4,813.7 1352.4,813.7 1355.4,813.7 1358.4,813.7 1361.4,813.7 1364.4,813.6 1367.4,813.6 1370.4,813.6 1373.4,813.6 1376.4,813.6 1379.4,813.6 1382.4,813.6 1385.4,813.5 1388.4,813.5 1391.4,813.5 1394.4,813.5 1397.4,813.5 1400.4,813.5 1403.4,813.5 1406.4,813.5 1409.4,813.5 1412.4,813.5 1415.4,813.5 1418.4,813.4 1421.4,813.4 1424.4,813.4 1427.4,813.4 1430.4,813.4 1433.4,813.4 1436.4,813.4 1439.4,813.4 1442.4,813.4 1445.4,813.4 1448.4,813.4 1451.4,813.4 1454.4,813.4 1457.4,813.4 1460.4,813.3 1463.4,813.3 1466.4,813.3 1469.4,813.3 1472.4,813.3 1475.4,813.3 1478.4,813.3 1481.4,813.3 1484.4,813.3 1487.4,813.3 1490.4,813.2 1493.4,813.2 1496.4,813.2 1499.4,813.2 1502.4,813.2 1505.4,813.2 1508.4,813.2 1511.4,813.1 1514.4,813.1 1517.4,813.1 1520.4,813.1 1523.4,813.1 1526.4,813.1 1529.4,813.1 1532.4,813 1535.4,813 1538.4,813 1541.4,813 1544.4,813 1547.4,813 1550.4,812.9 1553.4,812.9 1556.4,812.9 1559.4,812.9 1562.4,812.9 1565.4,812.8 1568.4,812.8 1571.4,812.8 1574.4,812.8 1577.4,812.8 1580.4,812.8 1583.4,812.7 1586.4,812.7 1589.4,812.7 1592.4,812.7 1595.4,812.7 1598.4,812.7 1601.4,812.6 1604.4,812.6 1607.4,812.6 1610.4,812.6 1613.4,812.6 1616.4,812.6 1619.4,812.6 1622.4,812.5 1625.4,812.5 1628.4,812.5 1631.4,812.5 1634.4,812.5 1637.4,812.5 1640.4,812.5 1643.4,812.4 1646.4,812.4 1649.4,812.4 1652.4,812.4 1655.4,812.4 1658.4,812.4 1661.4,812.4 1664.4,812.4 1667.4,812.4 1670.4,812.4 1673.4,812.3 1676.4,812.3 1679.4,812.3 1682.4,812.3 1685.4,812.3 1688.4,812.3 1691.4,812.3 1694.4,812.3 1697.4,812.3 1700.4,812.3 1703.4,812.3 1706.4,812.3 1709.4,812.3 1712.4,812.3 1715.4,812.3 1718.4,812.3 1721.4,812.3 1724.4,812.3 1727.4,812.4 1730.4,812.4 1733.4,812.4 1736.4,812.4 1739.4,812.5 1742.4,812.5 1745.4,812.5 1748.4,812.6 1751.4,812.6 1752.6,812.6 1755.5,812.8 1758.5,813 1761.4,813.1 1764.3,813.3 1767.2,813.6 1770,814 1772.6,814.5 1775.3,815 1777.9,815.7 1780.4,816.4 1782.8,817.1 1785,818 1787.3,819.1 1789.4,820.3 1791.3,821.6 1793,823 1794.4,824.4 1795.6,825.8 1796.6,827.4 1797.5,829 1798.2,830.9 1798.8,832.9 1799.2,835 1799.5,837 1799.6,838.8 1799.6,840.5 1799.5,842.3 1799.5,844.5 1799.5,846.7 1799.5,849.2 1799.6,852.1 1799.6,855.2 1799.6,858.3 1799.6,861.3 1799.6,864 1799.6,866.5 1799.5,868.5 1799.4,870.2 1799.4,871.5 1799.3,872.8 1799,874 1798.6,875.3 1798,876.6 1797.3,877.8 1796.5,879 1795.4,880.3 1794.1,881.7 1792.6,882.9 1791,884 1789,885.1 1786.8,886 1784.4,886.8 1782,887.5 1779.2,888.2 1776.3,888.9 1773.3,889.4 1770,890 1767.7,890.4 1765.4,890.7 1762.9,891 1760.3,891.4 1757.7,891.7 1755.1,892 1752.5,892.2 1750,892.5 1747.5,892.7 1745,893 1742.5,893.2 1740,893.4 1737.5,893.5 1735,893.7 1732.5,893.9 1730,894 1727.3,894.1 1724.5,894.2 1721.8,894.3 1719.1,894.4 1716.4,894.5 1713.7,894.5 1711,894.6 1709.4,894.6 1706.4,894.6 1703.4,894.7 1700.4,894.7 1697.4,894.7 1694.4,894.7 1691.4,894.7 1688.4,894.8 1685.4,894.8 1682.4,894.8 1679.4,894.8 1676.4,894.8 1673.4,894.9 1670.4,894.9 1667.4,894.9 1664.4,894.9 1661.4,894.9 1658.4,895 1655.4,895 1652.4,895 1649.4,895 1646.4,895 1643.4,895.1 1640.4,895.1 1637.4,895.1 1634.4,895.1 1631.4,895.1 1628.4,895.2 1625.4,895.2 1622.4,895.2 1619.4,895.2 1616.4,895.2 1613.4,895.2 1610.4,895.3 1607.4,895.3 1604.4,895.3 1601.4,895.3 1598.4,895.3 1595.4,895.4 1592.4,895.4 1589.4,895.4 1586.4,895.4 1583.4,895.4 1580.4,895.4 1577.4,895.4 1574.4,895.5 1571.4,895.5 1568.4,895.5 1565.4,895.5 1562.4,895.5 1559.4,895.5 1556.4,895.6 1553.4,895.6 1550.4,895.6 1547.4,895.6 1544.4,895.6 1541.4,895.6 1538.4,895.6 1535.4,895.7 1532.4,895.7 1529.4,895.7 1526.4,895.7 1523.4,895.7 1520.4,895.7 1517.4,895.7 1514.4,895.7 1511.4,895.8 1508.4,895.8 1505.4,895.8 1502.4,895.8 1499.4,895.8 1496.4,895.8 1493.4,895.8 1490.4,895.8 1487.4,895.8 1484.4,895.9 1481.4,895.9 1478.4,895.9 1475.4,895.9 1472.4,895.9 1469.4,895.9 1466.4,895.9 1463.4,895.9 1460.4,896 1457.4,896 1454.4,896 1451.4,896 1448.4,896 1445.4,896 1442.4,896 1439.4,896 1436.4,896 1433.4,896.1 1430.4,896.1 1427.4,896.1 1424.4,896.1 1421.4,896.1 1418.4,896.1 1415.4,896.1 1412.4,896.1 1409.4,896.1 1406.4,896.1 1403.4,896.2 1400.4,896.2 1397.4,896.2 1394.4,896.2 1391.4,896.2 1388.4,896.2 1385.4,896.2 1382.4,896.2 1379.4,896.2 1376.4,896.2 1373.4,896.2 1370.4,896.2 1367.4,896.2 1364.4,896.3 1361.4,896.3 1358.4,896.3 1355.4,896.3 1352.4,896.3 1349.4,896.3 1346.4,896.3 1343.4,896.3 1340.4,896.3 1337.4,896.3 1334.4,896.3 1331.4,896.3 1328.4,896.3 1325.4,896.3 1322.4,896.3 1319.4,896.3 1316.4,896.3 1313.4,896.3 1310.4,896.3 1307.4,896.3 1304.4,896.3 1301.4,896.3 1298.4,896.3 1295.4,896.3 1292.4,896.3 1289.4,896.3 1286.4,896.3 1283.4,896.3 1280.4,896.3 1277.4,896.3 1274.4,896.3 1271.4,896.3 1268.4,896.3 1265.4,896.3 1262.4,896.3 1259.4,896.3 1256.4,896.3 1253.4,896.3 1250.4,896.3 1247.4,896.3 1244.4,896.2 1241.4,896.2 1238.4,896.2 1235.4,896.2 1232.4,896.2 1229.4,896.2 1226.4,896.2 1223.4,896.2 1220.4,896.2 1217.4,896.2 1214.4,896.2 1211.4,896.2 1208.4,896.2 1205.4,896.2 1202.4,896.2 1199.4,896.2 1196.4,896.2 1193.4,896.2 1190.4,896.2 1187.4,896.2 1184.4,896.1 1181.4,896.1 1178.4,896.1 1175.4,896.1 1172.4,896.1 1169.4,896.1 1166.4,896.1 1163.4,896.1 1160.4,896.1 1157.4,896.1 1154.4,896.1 1151.4,896.1 1148.4,896.1 1145.4,896.1 1142.4,896.1 1139.4,896 1136.4,896 1133.4,896 1130.4,896 1127.4,896 1124.4,896 1121.4,896 1118.4,896 1115.4,896 1112.4,896 1109.4,896 1106.4,896 1103.4,896 1100.4,895.9 1097.4,895.9 1094.4,895.9 1091.4,895.9 1088.4,895.9 1085.4,895.9 1082.4,895.9 1079.4,895.9 1076.4,895.9 1073.4,895.9 1070.4,895.9 1067.4,895.9 1064.4,895.9 1061.4,895.8 1058.4,895.8 1055.4,895.8 1052.4,895.8 1049.4,895.8 1046.4,895.8 1043.4,895.8 1040.4,895.8 1037.4,895.8 1034.4,895.8 1031.4,895.8 1028.4,895.8 1025.4,895.7 1022.4,895.7 1019.4,895.7 1016.4,895.7 1013.4,895.7 1010.4,895.7 1007.4,895.7 1004.4,895.7 1001.4,895.7 998.4,895.7 995.4,895.7 992.4,895.7 989.4,895.7 986.4,895.7 983.4,895.6 980.4,895.6 977.4,895.6 974.4,895.6 971.4,895.6 968.4,895.6 965.4,895.6 962.4,895.6 959.4,895.6 956.4,895.6 953.4,895.6 950.4,895.6 947.4,895.6 944.4,895.6 941.4,895.5 938.4,895.5 935.4,895.5 932.4,895.5 929.4,895.5 926.4,895.5 923.4,895.5 920.4,895.5 917.4,895.5 914.4,895.5 911.4,895.5 908.4,895.5 905.4,895.5 902.4,895.5 899.4,895.5 896.4,895.5 893.4,895.5 890.4,895.5 887.4,895.4 884.4,895.4 881.4,895.4 878.4,895.4 875.4,895.4 872.4,895.4 869.4,895.4 866.4,895.4 863.4,895.4 860.4,895.4 857.4,895.4 854.4,895.4 851.4,895.4 848.4,895.4 845.4,895.4 842.4,895.4 839.4,895.4 836.4,895.4 833.4,895.4 830.4,895.4 827.4,895.4 824.4,895.4 821.4,895.4 818.4,895.4 815.4,895.4 812.4,895.4 809.4,895.4 806.4,895.3 803.4,895.3 800.4,895.3 797.4,895.3 794.4,895.3 791.4,895.3 788.4,895.3 785.4,895.3 782.4,895.3 779.4,895.3 776.4,895.3 773.4,895.3 770.4,895.3 767.4,895.3 764.4,895.3 761.4,895.3 758.4,895.3 755.4,895.3 752.4,895.3 749.4,895.3 746.4,895.3 743.4,895.3 740.4,895.3 737.4,895.3 734.4,895.2 731.4,895.2 728.4,895.2 725.4,895.2 722.4,895.2 719.4,895.2 716.4,895.2 713.4,895.2 710.4,895.2 707.4,895.2 704.4,895.2 701.4,895.2 698.4,895.2 695.4,895.2 692.4,895.2 689.4,895.2 686.4,895.1 683.4,895.1 680.4,895.1 677.4,895.1 674.4,895.1 671.4,895.1 668.4,895.1 665.4,895.1 662.4,895.1 659.4,895.1 656.4,895.1 653.4,895 650.4,895 647.4,895 644.4,895 641.4,895 638.4,895 635.4,895 632.4,895 629.4,894.9 626.4,894.9 623.4,894.9 620.4,894.8 617.4,894.8 614.4,894.8 611.4,894.7 608.4,894.7 605.4,894.7 602.4,894.6 599.4,894.6 596.4,894.5 593.4,894.5 590.4,894.4 587.4,894.4 584.4,894.3 581.4,894.3 578.4,894.2 575.4,894.2 572.4,894.1 569.4,894.1 566.4,894 563.4,894 560.4,893.9 557.4,893.9 554.4,893.8 551.4,893.8 548.4,893.7 545.4,893.7 542.4,893.7 539.4,893.6 536.4,893.6 533.4,893.5 530.4,893.5 527.4,893.4 524.4,893.4 521.4,893.4 518.4,893.3 515.4,893.3 512.4,893.2 509.4,893.2 506.4,893.1 503.4,893.1 500.4,893.1 497.4,893 494.4,893 491.4,892.9 488.4,892.9 485.4,892.8 482.4,892.8 479.4,892.7 476.4,892.7 473.4,892.6 470.4,892.6 467.4,892.6 464.4,892.5 461.4,892.5 458.4,892.4 455.4,892.4 452.4,892.3 449.4,892.3 446.4,892.2 443.4,892.2 440.4,892.1 437.4,892 434.4,892 431.4,891.9 428.4,891.9 425.4,891.8 422.4,891.8 419.4,891.7 416.4,891.6 413.4,891.6 410.4,891.5 407.4,891.5 404.4,891.4 401.4,891.3 398.4,891.3 395.4,891.2 392.4,891.1 389.4,891.1 386.4,891 383.4,890.9 380.4,890.8 377.4,890.8 374.4,890.7 371.4,890.6 368.4,890.5 365.4,890.4 362.4,890.3 359.4,890.3 356.4,890.2 353.4,890.1 350.4,890 347.4,889.9 344.4,889.8 341.4,889.7 338.4,889.6 335.4,889.5 332.4,889.4 329.4,889.3 326.4,889.2 323.4,889.1 320.4,889 317.4,888.9 314.4,888.8 311.4,888.7 308.4,888.6 305.4,888.5 302.4,888.4 299.4,888.3 296.4,888.2 293.4,888.1 290.4,887.9 287.4,887.8 284.4,887.7 281.4,887.6 278.4,887.5 275.4,887.4 272.4,887.3 269.4,887.1 266.4,887 263.4,886.9 260.4,886.8 257.4,886.7 254.4,886.6 251.4,886.4 248.4,886.3 245.4,886.2 242.4,886.1 239.4,886 236.4,885.9 233.4,885.7 230.4,885.6 227.4,885.5 224.4,885.4 221.4,885.3 218.4,885.1 215.4,885 212.4,884.9 209.4,884.8 206.4,884.7 203.4,884.5 200.4,884.4 197.4,884.3 194.4,884.2 191.4,884.1 188.4,883.9 185.4,883.8 182.4,883.7 179.4,883.6 176.4,883.4 173.4,883.3 170.4,883.2 167.4,883.1 164.4,882.9 161.4,882.8 158.4,882.7 155.4,882.5 152.4,882.4 149.4,882.3 146.4,882.1 143.4,882 140.4,881.9 137.4,881.7 134.4,881.6 131.4,881.4 128.4,881.3 125.4,881.2 122.4,881 119.4,880.9 116.4,880.7 113.4,880.6 110.4,880.5 107.4,880.3 104.4,880.2 101.4,880 98.4,879.9 95.4,879.7 92.4,879.6 89.4,879.4 86.4,879.3 83.4,879.2 80.4,879 77.4,878.9 74.4,878.7 71.4,878.6 68.4,878.4 65.4,878.3 62.4,878.1 59.4,878 56.4,877.8" fill="#808080" stroke="#262626" stroke-width="1.3"/>
 <polyline points="56.4,834 59.4,833.7 62.4,833.5 65.4,833.2 68.4,832.9 71.4,832.7 74.4,832.4 77.4,832.2 80.4,831.9 83.4,831.7 86.4,831.5 89.4,831.2 92.4,831 95.4,830.8 98.4,830.6 101.4,830.4 104.4,830.2 107.4,830 110.4,829.8 113.4,829.6 116.4,829.4 119.4,829.2 122.4,829.1 125.4,828.9 128.4,828.7 131.4,828.5 134.4,828.3 137.4,828.2 140.4,828 143.4,827.8 146.4,827.7 149.4,827.5 152.4,827.3 155.4,827.2 158.4,827 161.4,826.9 164.4,826.7 167.4,826.6 170.4,826.5 173.4,826.3 176.4,826.2 179.4,826.1 182.4,826 185.4,825.9 188.4,825.8 191.4,825.6 194.4,825.5 197.4,825.4 200.4,825.3 203.4,825.2 206.4,825.1 209.4,825 212.4,824.9 215.4,824.8 218.4,824.8 221.4,824.7 224.4,824.6 227.4,824.5 230.4,824.4 233.4,824.3 236.4,824.2 239.4,824.1 242.4,824 245.4,823.9 248.4,823.9 251.4,823.8 254.4,823.7 257.4,823.6 260.4,823.5 263.4,823.5 266.4,823.4 269.4,823.3 272.4,823.2 275.4,823.1 278.4,823.1 281.4,823 284.4,822.9 287.4,822.9 290.4,822.8 293.4,822.7 296.4,822.6 299.4,822.6 302.4,822.5 305.4,822.4 308.4,822.4 311.4,822.3 314.4,822.2 317.4,822.2 320.4,822.1 323.4,822 326.4,822 329.4,821.9 332.4,821.9 335.4,821.8 338.4,821.7 341.4,821.7 344.4,821.6 347.4,821.6 350.4,821.5 353.4,821.4 356.4,821.4 359.4,821.3 362.4,821.3 365.4,821.2 368.4,821.2 371.4,821.1 374.4,821 377.4,821 380.4,820.9 383.4,820.9 386.4,820.8 389.4,820.8 392.4,820.7 395.4,820.7 398.4,820.6 401.4,820.6 404.4,820.5 407.4,820.5 410.4,820.4 413.4,820.4 416.4,820.3 419.4,820.3 422.4,820.2 425.4,820.2 428.4,820.1 431.4,820.1 434.4,820 437.4,820 440.4,819.9 443.4,819.9 446.4,819.8 449.4,819.8 452.4,819.7 455.4,819.7 458.4,819.6 461.4,819.6 464.4,819.6 467.4,819.5 470.4,819.5 473.4,819.4 476.4,819.4 479.4,819.3 482.4,819.3 485.4,819.2 488.4,819.2 491.4,819.2 494.4,819.1 497.4,819.1 500.4,819 503.4,819 506.4,818.9 509.4,818.9 512.4,818.9 515.4,818.8 518.4,818.8 521.4,818.7 524.4,818.7 527.4,818.7 530.4,818.6 533.4,818.6 536.4,818.5 539.4,818.5 542.4,818.5 545.4,818.4 548.4,818.4 551.4,818.4 554.4,818.3 557.4,818.3 560.4,818.3 563.4,818.2 566.4,818.2 569.4,818.1 572.4,818.1 575.4,818.1 578.4,818.1 581.4,818 584.4,818 587.4,818 590.4,817.9 593.4,817.9 596.4,817.9 599.4,817.8 602.4,817.8 605.4,817.8 608.4,817.8 611.4,817.7 614.4,817.7 617.4,817.7 620.4,817.7 623.4,817.6 626.4,817.6 629.4,817.6 632.4,817.6 635.4,817.5 638.4,817.5 641.4,817.5 644.4,817.5 647.4,817.4 650.4,817.4 653.4,817.4 656.4,817.4 659.4,817.4 662.4,817.3 665.4,817.3 668.4,817.3 671.4,817.3 674.4,817.3 677.4,817.3 680.4,817.2 683.4,817.2 686.4,817.2 689.4,817.2 692.4,817.2 695.4,817.1 698.4,817.1 701.4,817.1 704.4,817.1 707.4,817.1 710.4,817.1 713.4,817 716.4,817 719.4,817 722.4,817 725.4,817 728.4,817 731.4,816.9 734.4,816.9 737.4,816.9 740.4,816.9 743.4,816.9 746.4,816.9 749.4,816.9 752.4,816.8 755.4,816.8 758.4,816.8 761.4,816.8 764.4,816.8 767.4,816.8 770.4,816.8 773.4,816.8 776.4,816.7 779.4,816.7 782.4,816.7 785.4,816.7 788.4,816.7 791.4,816.7 794.4,816.7 797.4,816.6 800.4,816.6 803.4,816.6 806.4,816.6 809.4,816.6 812.4,816.6 815.4,816.6 818.4,816.6 821.4,816.5 824.4,816.5 827.4,816.5 830.4,816.5 833.4,816.5 836.4,816.5 839.4,816.5 842.4,816.5 845.4,816.5 848.4,816.4 851.4,816.4 854.4,816.4 857.4,816.4 860.4,816.4 863.4,816.4 866.4,816.4 869.4,816.4 872.4,816.3 875.4,816.3 878.4,816.3 881.4,816.3 884.4,816.3 887.4,816.3 890.4,816.3 893.4,816.3 896.4,816.3 899.4,816.2 902.4,816.2 905.4,816.2 908.4,816.2 911.4,816.2 914.4,816.2 917.4,816.2 920.4,816.2 923.4,816.1 926.4,816.1 929.4,816.1 932.4,816.1 935.4,816.1 938.4,816.1 941.4,816.1 944.4,816.1 947.4,816 950.4,816 953.4,816 956.4,816 959.4,816 962.4,816 965.4,816 968.4,815.9 971.4,815.9 974.4,815.9 977.4,815.9 980.4,815.9 983.4,815.9 986.4,815.9 989.4,815.9 992.4,815.8 995.4,815.8 998.4,815.8 1001.4,815.8 1004.4,815.8 1007.4,815.8 1010.4,815.7 1013.4,815.7 1016.4,815.7 1019.4,815.7 1022.4,815.7 1025.4,815.7 1028.4,815.7 1031.4,815.6 1034.4,815.6 1037.4,815.6 1040.4,815.6 1043.4,815.6 1046.4,815.6 1049.4,815.6 1052.4,815.5 1055.4,815.5 1058.4,815.5 1061.4,815.5 1064.4,815.5 1067.4,815.5 1070.4,815.4 1073.4,815.4 1076.4,815.4 1079.4,815.4 1082.4,815.4 1085.4,815.4 1088.4,815.4 1091.4,815.3 1094.4,815.3 1097.4,815.3 1100.4,815.3 1103.4,815.3 1106.4,815.3 1109.4,815.2 1112.4,815.2 1115.4,815.2 1118.4,815.2 1121.4,815.2 1124.4,815.2 1127.4,815.2 1130.4,815.1 1133.4,815.1 1136.4,815.1 1139.4,815.1 1142.4,815.1 1145.4,815.1 1148.4,815 1151.4,815 1154.4,815 1157.4,815 1160.4,815 1163.4,815 1166.4,814.9 1169.4,814.9 1172.4,814.9 1175.4,814.9 1178.4,814.9 1181.4,814.9 1184.4,814.9 1187.4,814.8 1190.4,814.8 1193.4,814.8 1196.4,814.8 1199.4,814.8 1202.4,814.8 1205.4,814.7 1208.4,814.7 1211.4,814.7 1214.4,814.7 1217.4,814.7 1220.4,814.7 1223.4,814.6 1226.4,814.6 1229.4,814.6 1232.4,814.6 1235.4,814.6 1238.4,814.6 1241.4,814.5 1244.4,814.5 1247.4,814.5 1250.4,814.5 1253.4,814.5 1256.4,814.5 1259.4,814.4 1262.4,814.4 1265.4,814.4 1268.4,814.4 1271.4,814.4 1274.4,814.4 1277.4,814.4 1280.4,814.3 1283.4,814.3 1286.4,814.3 1287,814.3" fill="none" stroke="#262626" stroke-width="1.2"/>
 <line x1="56.4" y1="855" x2="56.4" y2="878" stroke="#111" stroke-width="1.5"/>
 <polyline points="56.4,855 59.4,853.7 62.4,852.4 65.4,851.2 68.4,850 71.4,849 74.4,848.1 77.4,847.2 80.4,846.3 83.4,845.4 86.4,844.6 89.4,843.8 92.4,843.1 95.4,842.4 98.4,841.8 101.4,841.2 104.4,840.7 107.4,840.2 110.4,839.7 113.4,839.2 116.4,838.8 119.4,838.4 122.4,837.9 125.4,837.5 128.4,837.2 131.4,836.8 134.4,836.4 137.4,836 140.4,835.7 143.4,835.3 146.4,834.9 149.4,834.6 152.4,834.2 155.4,833.8 158.4,833.4 161.4,833 164.4,832.6 167.4,832.2 170.4,831.8 173.4,831.5 176.4,831.2 179.4,830.9 182.4,830.6 185.4,830.4 188.4,830.2 191.4,830.1 194.4,829.9 197.4,829.8 200.4,829.6 203.4,829.5 206.4,829.3 209.4,829.2 212.4,829 215.4,828.9 218.4,828.8 221.4,828.7 224.4,828.5 227.4,828.4 230.4,828.3 233.4,828.2 236.4,828.1 239.4,828 242.4,827.9 245.4,827.8 248.4,827.7 251.4,827.6 254.4,827.5 257.4,827.5 260.4,827.4 263.4,827.3 266.4,827.2 269.4,827.2 272.4,827.1 275.4,827.1 278.4,827 281.4,827 284.4,826.9 287.4,826.9 290.4,826.9 293.4,826.8 296.4,826.8 299.4,826.8 302.4,826.8 305.4,826.8 308.4,826.8 311.4,826.8 314.4,826.7 317.4,826.7 320.4,826.7 323.4,826.7 326.4,826.7 329.4,826.7 332.4,826.7 335.4,826.7 338.4,826.7 341.4,826.6 344.4,826.6 347.4,826.6 350.4,826.6 353.4,826.6 356.4,826.6 359.4,826.6 362.4,826.6 365.4,826.6 368.4,826.6 371.4,826.6 374.4,826.6 377.4,826.5 380.4,826.5 383.4,826.5 386.4,826.5 389.4,826.5 392.4,826.5 395.4,826.5 398.4,826.5 401.4,826.5 404.4,826.5 407.4,826.5 410.4,826.5 413.4,826.5 416.4,826.5 419.4,826.5 422.4,826.5 425.4,826.5 428.4,826.5 431.4,826.5 434.4,826.5 437.4,826.5 440.4,826.5 443.4,826.5 446.4,826.6 449.4,826.6 452.4,826.6 455.4,826.6 458.4,826.6 461.4,826.6 464.4,826.7 467.4,826.7 470.4,826.7 473.4,826.7 476.4,826.8 479.4,826.8 482.4,826.8 485.4,826.8 488.4,826.9 491.4,826.9 494.4,826.9 497.4,826.9 500.4,826.9 503.4,827 506.4,827 509.4,827 512.4,827 515.4,827 518.4,827.1 521.4,827.1 524.4,827.1 527.4,827.1 530.4,827.1 533.4,827.1 536.4,827.2 539.4,827.2 542.4,827.2 545.4,827.2 548.4,827.2 551.4,827.2 554.4,827.2 557.4,827.3 560.4,827.3 563.4,827.3 566.4,827.3 569.4,827.3 572.4,827.3 575.4,827.4 578.4,827.4 581.4,827.4 584.4,827.4 587.4,827.4 590.4,827.4 593.4,827.5 596.4,827.5 599.4,827.5 602.4,827.5 605.4,827.5 608.4,827.5 611.4,827.5 614.4,827.6 617.4,827.6 620.4,827.6 623.4,827.6 626.4,827.6 629.4,827.6 632.4,827.7 635.4,827.7 638.4,827.7 641.4,827.7 644.4,827.7 647.4,827.7 650.4,827.8 653.4,827.8 656.4,827.8 659.4,827.8 662.4,827.8 665.4,827.8 668.4,827.9 671.4,827.9 674.4,827.9 677.4,827.9 680.4,827.9 683.4,827.9 686.4,827.9 689.4,828 692.4,828 695.4,828 698.4,828 701.4,828 704.4,828 707.4,828.1 710.4,828.1 713.4,828.1 716.4,828.1 719.4,828.1 722.4,828.1 725.4,828.2 728.4,828.2 731.4,828.2 734.4,828.2 737.4,828.2 740.4,828.2 743.4,828.2 746.4,828.3 749.4,828.3 752.4,828.3 755.4,828.3 758.4,828.3 761.4,828.3 764.4,828.4 767.4,828.4 770.4,828.4 773.4,828.4 776.4,828.4 779.4,828.4 782.4,828.4 785.4,828.5 788.4,828.5 791.4,828.5 794.4,828.5 797.4,828.5 800.4,828.5 803.4,828.6 806.4,828.6 809.4,828.6 812.4,828.6 815.4,828.6 818.4,828.7 821.4,828.7 824.4,828.7 827.4,828.7 830.4,828.7 833.4,828.7 836.4,828.8 839.4,828.8 842.4,828.8 845.4,828.8 848.4,828.8 851.4,828.9 854.4,828.9 857.4,828.9 860.4,828.9 863.4,828.9 866.4,828.9 869.4,829 872.4,829 875.4,829 878.4,829 881.4,829 884.4,829.1 887.4,829.1 890.4,829.1 893.4,829.1 896.4,829.2 899.4,829.2 902.4,829.2 905.4,829.2 908.4,829.2 911.4,829.3 914.4,829.3 917.4,829.3 920.4,829.3 923.4,829.4 926.4,829.4 929.4,829.4 932.4,829.4 935.4,829.5 938.4,829.5 941.4,829.5 944.4,829.5 947.4,829.6 950.4,829.6 953.4,829.6 956.4,829.6 959.4,829.7 962.4,829.7 965.4,829.7 968.4,829.8 971.4,829.8 974.4,829.8 977.4,829.8 980.4,829.9 983.4,829.9 986.4,829.9 989.4,830 992.4,830 995.4,830 998.4,830.1 1001.4,830.1 1004.4,830.1 1007.4,830.2 1010.4,830.2 1013.4,830.3 1016.4,830.3 1019.4,830.3 1022.4,830.4 1025.4,830.4 1028.4,830.5 1031.4,830.5 1034.4,830.5 1037.4,830.6 1040.4,830.6 1043.4,830.7 1046.4,830.7 1049.4,830.8 1052.4,830.8 1055.4,830.9 1058.4,831 1061.4,831.1 1064.4,831.2 1067.4,831.3 1070.4,831.4 1073.4,831.5 1076.4,831.7 1079.4,831.8 1082.4,831.9 1085.4,832 1088.4,832 1091.4,832.1 1094.4,832.2 1097.4,832.2 1100.4,832.2 1103.4,832.2 1106.4,832.2 1109.4,832.2 1112.4,832.2 1115.4,832.2 1118.4,832.2 1121.4,832.1 1124.4,832.1 1127.4,832.1 1130.4,832.1 1133.4,832.1 1136.4,832 1139.4,832 1142.4,832 1145.4,831.9 1148.4,831.9 1151.4,831.8 1154.4,831.7 1157.4,831.5 1160.4,831.4 1163.4,831.2 1166.4,831.1 1169.4,830.9 1172.4,830.7 1175.4,830.6 1178.4,830.4 1181.4,830.2 1184.4,830 1187.4,829.8 1190.4,829.6 1193.4,829.4 1196.4,829.2 1199.4,828.9 1202.4,828.6 1205.4,828.4 1208.4,828 1211.4,827.7 1214.4,827.3 1217.4,826.9 1220.4,826.5 1223.4,826.1 1226.4,825.6 1229.4,825.1 1232.4,824.6 1235.4,824.1 1238.4,823.6 1241.4,822.9 1244.4,822.3 1247.4,821.6 1250.4,820.8 1253.4,820.1 1256.4,819.4 1259.4,818.8 1262.4,818.2 1265.4,817.6 1268.4,817 1271.4,816.4 1274.4,815.8 1277.4,815.2 1280.4,814.8 1283.4,814.5 1286.4,814.3" fill="none" stroke="#b87ab4" stroke-width="2"/>
 <polyline points="426,826.6 429,826.6 432,826.6 435,826.7 438,826.7 441,826.7 444,826.8 447,826.9 450,826.9 453,827 456,827 459,827.1 462,827.2 465,827.3 468,827.5 471,827.6 474,827.8 477,827.9 480,828.1 483,828.3 486,828.5 489,828.7 492,828.9 495,829.1 498,829.3 501,829.5 504,829.7 507,829.9 510,830.2 513,830.4 516,830.7 519,831 522,831.3 525,831.6 528,832 531,832.4 534,832.7 537,833.1 540,833.5 543,833.9 546,834.2 549,834.6 552,835 555,835.3 558,835.7 561,836 564,836.4 567,836.7 570,837.1 573,837.4 576,837.8 579,838.2 582,838.5 585,838.9 588,839.3 591,839.7 594,840 597,840.4 600,840.8 603,841.1 606,841.5 609,841.9 612,842.2 615,842.6 618,842.9 621,843.2 624,843.6 627,843.9 630,844.2 633,844.5 636,844.8 639,845 642,845.3 645,845.5 648,845.8 651,846 654,846.2 657,846.4 660,846.6 663,846.8 666,847 669,847.2 672,847.3 675,847.5 678,847.7 681,847.9 684,848.1 687,848.2 690,848.4 693,848.6 696,848.7 699,848.9 702,849 705,849.2 708,849.3 711,849.5 714,849.6 717,849.8 720,849.9 723,850.1 726,850.2 729,850.3 732,850.5 735,850.6 738,850.8 741,850.9 744,851 747,851.1 750,851.3 753,851.4 756,851.5 759,851.6 762,851.8 765,851.9 768,852 771,852.1 774,852.3 777,852.4 780,852.5 783,852.6 786,852.7 789,852.9 792,853 795,853.1 798,853.2 801,853.3 804,853.5 807,853.6 810,853.7 813,853.9 816,854 819,854.1 822,854.3 825,854.4 828,854.5 831,854.7 834,854.8 837,854.9 840,855.1 843,855.2 846,855.4 849,855.5 852,855.6 855,855.8 858,855.9 861,856 864,856.1 867,856.3 870,856.4 873,856.5 876,856.6 879,856.7 882,856.8 885,856.9 888,857 891,857.1 894,857.2 897,857.3 900,857.4 903,857.4 906,857.5 909,857.5 912,857.6 915,857.6 918,857.7 921,857.7 924,857.7 927,857.7 930,857.7 933,857.7 936,857.7 939,857.7 942,857.7 945,857.7 948,857.7 951,857.7 954,857.7 957,857.7 960,857.7 963,857.7 966,857.7 969,857.7 972,857.7 975,857.7 978,857.7 981,857.7 984,857.7 987,857.7 990,857.7 993,857.7 996,857.6 999,857.6 1002,857.6 1005,857.6 1008,857.6 1011,857.6 1014,857.6 1017,857.6 1020,857.6 1023,857.6 1026,857.6 1029,857.6 1032,857.6 1035,857.6 1038,857.5 1041,857.5 1044,857.5 1047,857.5 1050,857.5 1053,857.5 1056,857.5 1059,857.5 1062,857.5 1065,857.5 1068,857.4 1071,857.4 1074,857.4 1077,857.4 1080,857.4 1083,857.4 1086,857.4 1089,857.4 1092,857.3 1095,857.3 1098,857.3 1101,857.3 1104,857.3 1107,857.2 1110,857.2 1113,857.1 1116,857.1 1119,857 1122,856.9 1125,856.8 1128,856.7 1131,856.6 1134,856.5 1137,856.4 1140,856.2 1143,856.1 1146,856 1149,855.8 1152,855.7 1155,855.5 1158,855.4 1161,855.2 1164,854.9 1167,854.7 1170,854.5 1173,854.2 1176,853.9 1179,853.6 1182,853.3 1185,852.9 1188,852.6 1191,852.2 1194,851.7 1197,851.2 1200,850.7 1203,850.1 1206,849.5 1209,848.7 1212,847.8 1215,846.8 1218,845.7 1221,844.6 1224,843.4 1227,842.2 1230,840.8 1233,839.4 1236,837.9 1239,836.4 1242,834.8 1245,833.1 1248,831.2 1251,829.1 1254,826.5 1257,823.7 1260,820.5 1262,818.3" fill="none" stroke="#501a52" stroke-width="1.3"/>
 <line x1="559" y1="827" x2="559" y2="836" stroke="#e02020" stroke-width="1.2"/>
 <line x1="559" y1="836" x2="559" y2="894" stroke="#989898" stroke-width="1" stroke-dasharray="2 1"/>
 <line x1="928" y1="829.5" x2="928" y2="857" stroke="#7474b4" stroke-width="1.8"/>
 <line x1="928" y1="857" x2="928" y2="895" stroke="#989898" stroke-width="1" stroke-dasharray="2 1"/>
 <line x1="1204.5" y1="828.5" x2="1204.5" y2="849" stroke="#7474b4" stroke-width="1.8"/>
 <line x1="1303" y1="814" x2="1303" y2="896" stroke="#9a9a9a" stroke-width="1" stroke-dasharray="2 1"/>
 <line x1="1711" y1="812" x2="1711" y2="894" stroke="#9a9a9a" stroke-width="1" stroke-dasharray="2 1"/>
 <g fill="#fff" stroke="#222" stroke-width="1">
  <circle cx="56.4" cy="834" r="2.5"/><circle cx="56.4" cy="855" r="2.5"/><circle cx="56.4" cy="877.8" r="2.5"/>
  <circle cx="186.8" cy="830" r="2.5"/><circle cx="426" cy="826.5" r="2.5"/><circle cx="508.7" cy="827" r="2.5"/>
  <circle cx="928" cy="857.7" r="2.5"/><circle cx="918.4" cy="895.5" r="2.5"/><circle cx="1141" cy="832" r="2.5"/>
  <circle cx="1262" cy="818" r="2.5"/><circle cx="1287.5" cy="814.4" r="2.5"/><circle cx="1752.6" cy="812.6" r="2.5"/>
  <circle cx="1799" cy="844.5" r="2.5"/><circle cx="1799" cy="868.2" r="2.5"/>
 </g>
 <path d="M18.5 966.5V937.5M13.5 942.5l5-5l5 5" fill="none" stroke="#1a1a60" stroke-width="1.1"/>
 <path d="M18.5 966.5H48M43 961.5l5 5l-5 5" fill="none" stroke="#c03030" stroke-width="1.1"/>
 <text x="13.8" y="931.5" font-size="9.5" fill="#1a1a60" font-family="Liberation Sans">Z</text>
 <text x="52.5" y="970.5" font-size="9.5" fill="#b82828" font-family="Liberation Sans">X</text>
</svg>

<div class="a" style="left:1888px;top:748px;width:8px;height:276px;background:linear-gradient(90deg,#eeeeee 0,#f1f1f1 6px,#fdfdfd 6px)"></div>
<!-- ===== status bar ===== -->
<div class="a" style="left:2px;top:1024px;width:1894px;height:20px;background:#f0f0f0"></div>
<div class="a" style="left:2px;top:1024px;width:1894px;height:1px;background:#fdfdfd"></div>
<div class="a" style="left:0;top:1044px;width:1897px;height:1px;background:#6c6c6c"></div>
<div class="a" style="left:0;top:1045px;width:1903px;height:5px;background:#e4e4e4"></div>
<div class="a" style="left:0;top:1050px;width:1903px;height:1px;background:#555"></div>
<span class="t" style="left:4px;top:1030px;font-size:12px;letter-spacing:0.045px;color:#111">Use the arrow keys with Ctrl to move the point, Tab to go to the next point, shift Tab to the previous point.</span>
<div class="sb" style="left:1537px;width:25px"></div>
<div class="sb" style="left:1565px;width:70px"></div>
<div class="sb" style="left:1638px;width:70px"></div>
<div class="sb" style="left:1711px;width:70px"></div>
<div class="sb" style="left:1784px;width:28px"></div>
<div class="sb" style="left:1815px;width:34px"></div>
<div class="sb" style="left:1851px;width:25px"></div>
<span class="st" style="left:1540px">"</span>
<span class="st" style="left:1567px">X: 5' 8.1"</span>
<span class="st" style="left:1640px">Y: 2.9"</span>
<span class="st" style="left:1713px">Z: 0.0"</span>
<span class="st" style="left:1817px">NUM</span>
<svg class="a" style="left:1883px;top:1031px" width="13" height="13"><path d="M12 1L1 12M12 5L5 12M12 9L9 12" stroke="#777" stroke-width="1.2"/></svg>

<div class="a" style="left:0;top:0;width:3px;height:1051px;background:linear-gradient(90deg,#666 0,#666 1px,#9a9a9a 1px,#9a9a9a 2px,#666 2px)"></div>
<!-- ===== Slices floating panel ===== -->
<div class="a" style="left:5px;top:60px;width:216px;height:246px;background:rgba(0,0,0,0.22);filter:blur(2.5px)"></div>
<div class="a" style="left:2px;top:56px;width:215px;height:247px;background:#e8e8e8;border:1px solid #c8c8c8;border-right:1px solid #606060;border-bottom:1px solid #a0a0a0;border-left:0"></div>
<div class="a" style="left:2px;top:57px;width:213px;height:22px;background:linear-gradient(#ececec,#e2e2e2)"></div>
<span class="t" style="left:10px;top:63px;font-size:11px;color:#151515">Slices</span>
<div class="a" style="left:195px;top:61px;width:15px;height:15px;border:1px solid #888;border-radius:2px;background:linear-gradient(#f4f4f4,#dcdcdc)"></div>
<svg class="a" style="left:195px;top:61px" width="15" height="15"><path d="M5.3 5.3l4.4 4.4M9.7 5.3l-4.4 4.4" stroke="#333" stroke-width="2.8" stroke-linecap="square"/><path d="M5.3 5.3l4.4 4.4M9.7 5.3l-4.4 4.4" stroke="#fff" stroke-width="1.1"/></svg>
<div class="a" style="left:7px;top:79px;width:204px;height:218px;border:1px solid #5a5a5a;border-right-color:#4a4a4a;border-bottom-color:#8a8a8a;background:#fff"></div>
<div class="a" style="left:8px;top:80px;width:202px;height:216px;border:1px solid #a0a0a0;border-right:0;border-bottom:0"></div>
<div class="a" style="left:10px;top:81px;width:199px;height:2px;background:#808080"></div>
<div class="a" style="left:10px;top:83px;width:198px;height:16px;background:linear-gradient(#f6f6f8,#ececec);border-bottom:1px solid #b8b8b8"></div>
<div class="a" style="left:167px;top:83px;width:1px;height:16px;background:#c0c0c0"></div>
<div class="a" style="left:169px;top:83px;width:1px;height:16px;background:#fdfdfd"></div>
<div class="a" style="left:207px;top:83px;width:1px;height:16px;background:#c0c0c0"></div>
<span class="t" style="left:16px;top:87px;font-size:11px;color:#111">Slices</span>
<span class="t" style="left:177px;top:87px;font-size:11px;color:#111">Pos.</span>
<span class="row" style="top:105px">Slice 1 (0.0")</span><span class="gg" style="top:105px">&gt;&gt;</span>
<span class="row" style="top:122px">Slice 2 (43.3")</span><span class="gg" style="top:122px">&gt;&gt;</span>
<span class="row" style="top:139px">Slice 3 (6' 3.0")</span><span class="gg" style="top:139px">&gt;&gt;</span>
<span class="row" style="top:156px">Slice 4 (8' 11.3")</span><span class="gg" style="top:156px">&gt;&gt;</span>
<span class="row" style="top:173px">Slice 5 (11' 10.4")</span><span class="gg" style="top:173px">&gt;&gt;</span>
<span class="row" style="top:190px">Slice 6 (12' 6.0")</span><span class="gg" style="top:190px">&gt;&gt;</span>
<span class="row" style="top:207px">Deck-Slice 1 (31.8")</span><span class="gg" style="top:207px">&gt;&gt;</span>
<span class="row" style="top:224px">Deck-Slice 2 (43.3")</span><span class="gg" style="top:224px">&gt;&gt;</span>
<span class="row" style="top:241px">Deck-Slice 3 (6' 3.1")</span><span class="gg" style="top:241px">&gt;&gt;</span>
<span class="row" style="top:258px">Deck-Slice 4 (8' 2.8")</span><span class="gg" style="top:258px">&gt;&gt;</span>
<span class="row" style="top:275px">Deck-Slice 5 (8' 7.2")</span><span class="gg" style="top:275px">&gt;&gt;</span>
<svg class="a" style="left:12px;top:224px" width="18" height="12"><path d="M1.5 10.5c3-5 6-7 9-6.5c2 0 4 2 6 4" fill="none" stroke="#111" stroke-width="1.8"/><path d="M9 4c2-1 3-1 5 0" stroke="#e070a0" stroke-width="1"/></svg>
</body></html>
